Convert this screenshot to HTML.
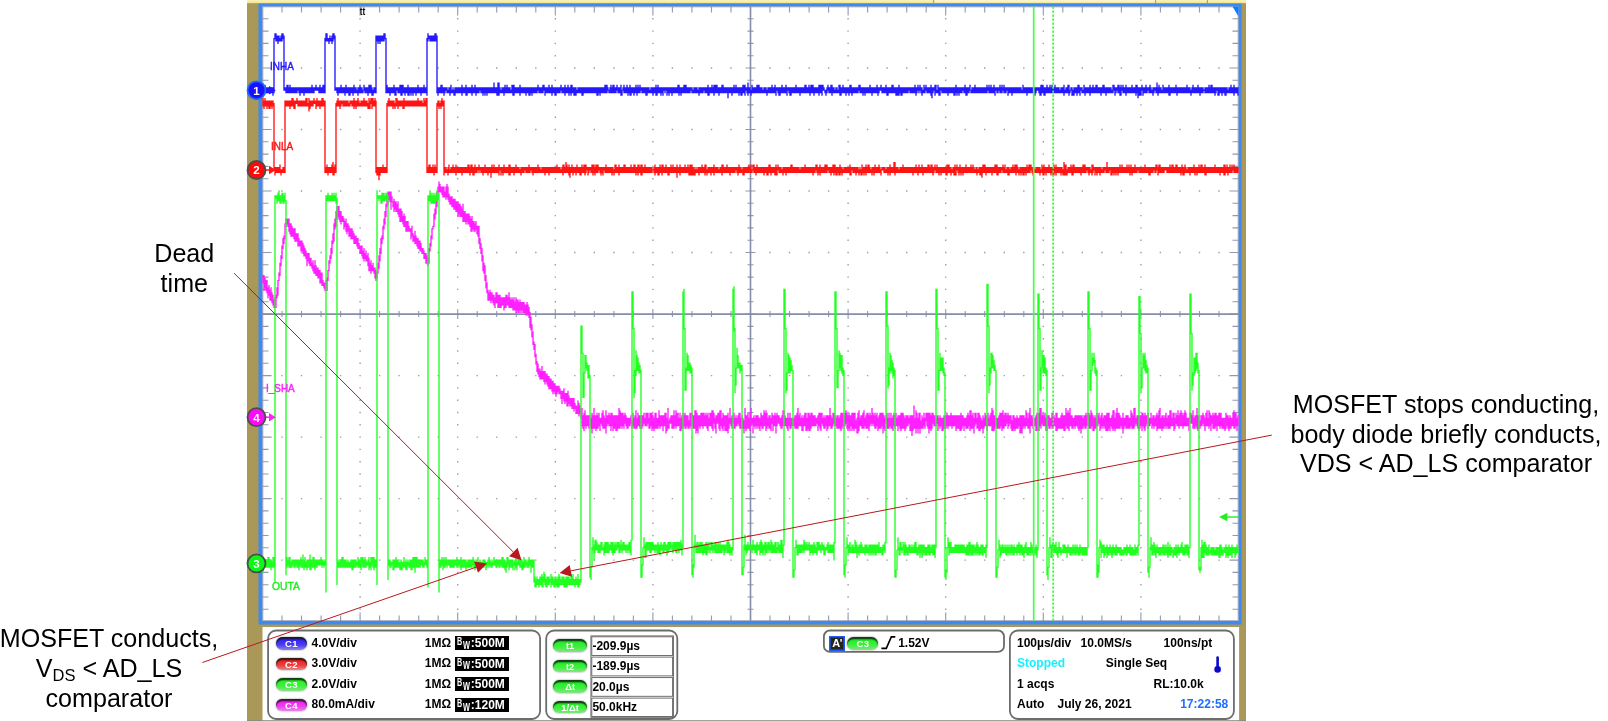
<!DOCTYPE html>
<html lang="en"><head><meta charset="utf-8"><title>Scope capture</title>
<style>
html,body{margin:0;padding:0;background:#fff;}
body{width:1608px;height:721px;position:relative;overflow:hidden;font-family:"Liberation Sans",Arial,sans-serif;color:#000;}
.abs{position:absolute;}
#frame{left:247px;top:0;width:999px;height:721px;background:#aa9858;}
#topband{left:247px;top:0;width:999px;height:3.2px;background:linear-gradient(#f7f1c4,#f4e98e);}
#plotb{left:258.5px;top:3.6px;width:983px;height:620.9px;background:#3c8af4;}
#plotw{left:262.5px;top:6.5px;width:976px;height:614.5px;background:#fff;}
#lower{left:262.5px;top:627px;width:976.5px;height:94px;background:#fff;}
#botline{left:247px;top:720px;width:999px;height:1px;background:#8a8a80;}
svg{position:absolute;left:0;top:0;overflow:visible;}
.note{position:absolute;text-align:center;font-size:25.1px;line-height:29.75px;white-space:nowrap;color:#000;}
.note sub{font-size:16.5px;vertical-align:baseline;position:relative;top:4.1px;line-height:0;}
.box{position:absolute;border:1.9px solid #6e6e6e;border-radius:8px;box-sizing:border-box;background:#fff;}
.t{position:absolute;font-weight:bold;font-size:12px;line-height:14px;white-space:nowrap;}
.pill{position:absolute;width:31.5px;height:12.5px;border-radius:7px;box-sizing:border-box;color:#fff;font-weight:bold;font-size:9.5px;line-height:13.6px;text-align:center;letter-spacing:.3px;text-indent:.3px;box-shadow:inset 0 2.2px 1.2px rgba(20,26,20,.85),0 0 1.8px rgba(90,100,90,.9);}
.pill.g{font-size:9.4px;line-height:13px;letter-spacing:0;text-indent:0;width:34.2px;}
.bw{position:absolute;width:53.5px;height:14px;background:#000;color:#fff;font-weight:bold;font-size:12px;line-height:15px;white-space:nowrap;}
.bw b{position:absolute;left:1.7px;top:-2px;font-size:10px;transform-origin:0 0;transform:scaleX(.72);}
.bw i{position:absolute;left:7.9px;top:1.5px;font-size:10px;font-style:normal;transform-origin:0 0;transform:scaleX(.74);}
.bw span{position:absolute;left:15.8px;top:-.3px;}
.lbl{position:absolute;font-size:11.5px;line-height:11.5px;white-space:nowrap;transform-origin:0 0;transform:scaleX(.865);-webkit-text-stroke:.45px currentColor;}
.cell{position:absolute;left:590.5px;width:83px;border:1px solid #555;box-sizing:border-box;height:21.4px;font-weight:bold;font-size:12px;line-height:18.5px;padding-left:.5px;background:#fff;white-space:nowrap;}
</style></head><body>
<div id="wrap" style="position:absolute;left:0;top:0;width:1608px;height:721px;will-change:transform;">

<svg width="1608" height="721" viewBox="0 0 1608 721">
<defs>
<linearGradient id="yb" x1="0" y1="0" x2="0" y2="1"><stop offset="0" stop-color="#f7f1c6"/><stop offset=".75" stop-color="#f5ea8c"/><stop offset="1" stop-color="#d8c870"/></linearGradient>
</defs>
<rect x="247" y="0" width="999" height="721" fill="#aa9858"/>
<rect x="247" y="0" width="999" height="3.3" fill="url(#yb)"/>
<rect x="934" y="0" width="221.6" height="2.6" fill="#fff" opacity=".28"/>
<path d="M933.7 0V3M1155.6 0V3M1207.4 0V3" stroke="#7a7448" stroke-width="1" opacity=".7"/>
<rect x="258.5" y="3.6" width="983" height="620.9" fill="#3c8af4"/>
<rect x="262.5" y="6.5" width="976" height="614.5" fill="#fff"/>
<rect x="262.5" y="627" width="976.6" height="94" fill="#fff"/>
<rect x="247" y="720.2" width="999" height="0.8" fill="#8a8a80"/>
<defs>
<radialGradient id="gb" cx=".45" cy=".4" r=".6"><stop offset="0" stop-color="#2a1cff"/><stop offset=".8" stop-color="#1c10f0"/><stop offset="1" stop-color="#1a60ff"/></radialGradient>
</defs>
<path d="M282 6.5 v6 M282 621 v-5.4 M282 311.1 v6 M301.5 6.5 v6 M301.5 621 v-5.4 M301.5 311.1 v6 M321.1 6.5 v6 M321.1 621 v-5.4 M321.1 311.1 v6 M340.6 6.5 v6 M340.6 621 v-5.4 M340.6 311.1 v6 M360.1 6.5 v9 M360.1 621 v-8.4 M360.1 309.1 v10 M379.6 6.5 v6 M379.6 621 v-5.4 M379.6 311.1 v6 M399.1 6.5 v6 M399.1 621 v-5.4 M399.1 311.1 v6 M418.7 6.5 v6 M418.7 621 v-5.4 M418.7 311.1 v6 M438.2 6.5 v6 M438.2 621 v-5.4 M438.2 311.1 v6 M457.7 6.5 v9 M457.7 621 v-8.4 M457.7 309.1 v10 M477.2 6.5 v6 M477.2 621 v-5.4 M477.2 311.1 v6 M496.7 6.5 v6 M496.7 621 v-5.4 M496.7 311.1 v6 M516.3 6.5 v6 M516.3 621 v-5.4 M516.3 311.1 v6 M535.8 6.5 v6 M535.8 621 v-5.4 M535.8 311.1 v6 M555.3 6.5 v9 M555.3 621 v-8.4 M555.3 309.1 v10 M574.8 6.5 v6 M574.8 621 v-5.4 M574.8 311.1 v6 M594.3 6.5 v6 M594.3 621 v-5.4 M594.3 311.1 v6 M613.9 6.5 v6 M613.9 621 v-5.4 M613.9 311.1 v6 M633.4 6.5 v6 M633.4 621 v-5.4 M633.4 311.1 v6 M652.9 6.5 v9 M652.9 621 v-8.4 M652.9 309.1 v10 M672.4 6.5 v6 M672.4 621 v-5.4 M672.4 311.1 v6 M691.9 6.5 v6 M691.9 621 v-5.4 M691.9 311.1 v6 M711.5 6.5 v6 M711.5 621 v-5.4 M711.5 311.1 v6 M731 6.5 v6 M731 621 v-5.4 M731 311.1 v6 M750.5 6.5 v9 M750.5 621 v-8.4 M750.5 309.1 v10 M770 6.5 v6 M770 621 v-5.4 M770 311.1 v6 M789.5 6.5 v6 M789.5 621 v-5.4 M789.5 311.1 v6 M809.1 6.5 v6 M809.1 621 v-5.4 M809.1 311.1 v6 M828.6 6.5 v6 M828.6 621 v-5.4 M828.6 311.1 v6 M848.1 6.5 v9 M848.1 621 v-8.4 M848.1 309.1 v10 M867.6 6.5 v6 M867.6 621 v-5.4 M867.6 311.1 v6 M887.1 6.5 v6 M887.1 621 v-5.4 M887.1 311.1 v6 M906.7 6.5 v6 M906.7 621 v-5.4 M906.7 311.1 v6 M926.2 6.5 v6 M926.2 621 v-5.4 M926.2 311.1 v6 M945.7 6.5 v9 M945.7 621 v-8.4 M945.7 309.1 v10 M965.2 6.5 v6 M965.2 621 v-5.4 M965.2 311.1 v6 M984.7 6.5 v6 M984.7 621 v-5.4 M984.7 311.1 v6 M1004.3 6.5 v6 M1004.3 621 v-5.4 M1004.3 311.1 v6 M1023.8 6.5 v6 M1023.8 621 v-5.4 M1023.8 311.1 v6 M1043.3 6.5 v9 M1043.3 621 v-8.4 M1043.3 309.1 v10 M1062.8 6.5 v6 M1062.8 621 v-5.4 M1062.8 311.1 v6 M1082.3 6.5 v6 M1082.3 621 v-5.4 M1082.3 311.1 v6 M1101.9 6.5 v6 M1101.9 621 v-5.4 M1101.9 311.1 v6 M1121.4 6.5 v6 M1121.4 621 v-5.4 M1121.4 311.1 v6 M1140.9 6.5 v9 M1140.9 621 v-8.4 M1140.9 309.1 v10 M1160.4 6.5 v6 M1160.4 621 v-5.4 M1160.4 311.1 v6 M1179.9 6.5 v6 M1179.9 621 v-5.4 M1179.9 311.1 v6 M1199.5 6.5 v6 M1199.5 621 v-5.4 M1199.5 311.1 v6 M1219 6.5 v6 M1219 621 v-5.4 M1219 311.1 v6 M262.5 18.8 h6 M1238.5 18.8 h-6 M747.5 18.8 h6 M262.5 31.1 h6 M1238.5 31.1 h-6 M747.5 31.1 h6 M262.5 43.4 h6 M1238.5 43.4 h-6 M747.5 43.4 h6 M262.5 55.7 h6 M1238.5 55.7 h-6 M747.5 55.7 h6 M262.5 68 h9 M1238.5 68 h-9 M745.5 68 h10 M262.5 80.3 h6 M1238.5 80.3 h-6 M747.5 80.3 h6 M262.5 92.6 h6 M1238.5 92.6 h-6 M747.5 92.6 h6 M262.5 104.9 h6 M1238.5 104.9 h-6 M747.5 104.9 h6 M262.5 117.2 h6 M1238.5 117.2 h-6 M747.5 117.2 h6 M262.5 129.5 h9 M1238.5 129.5 h-9 M745.5 129.5 h10 M262.5 141.8 h6 M1238.5 141.8 h-6 M747.5 141.8 h6 M262.5 154.1 h6 M1238.5 154.1 h-6 M747.5 154.1 h6 M262.5 166.4 h6 M1238.5 166.4 h-6 M747.5 166.4 h6 M262.5 178.7 h6 M1238.5 178.7 h-6 M747.5 178.7 h6 M262.5 191 h9 M1238.5 191 h-9 M745.5 191 h10 M262.5 203.3 h6 M1238.5 203.3 h-6 M747.5 203.3 h6 M262.5 215.6 h6 M1238.5 215.6 h-6 M747.5 215.6 h6 M262.5 227.9 h6 M1238.5 227.9 h-6 M747.5 227.9 h6 M262.5 240.2 h6 M1238.5 240.2 h-6 M747.5 240.2 h6 M262.5 252.5 h9 M1238.5 252.5 h-9 M745.5 252.5 h10 M262.5 264.8 h6 M1238.5 264.8 h-6 M747.5 264.8 h6 M262.5 277.1 h6 M1238.5 277.1 h-6 M747.5 277.1 h6 M262.5 289.4 h6 M1238.5 289.4 h-6 M747.5 289.4 h6 M262.5 301.7 h6 M1238.5 301.7 h-6 M747.5 301.7 h6 M262.5 314.1 h9 M1238.5 314.1 h-9 M745.5 314.1 h10 M262.5 326.4 h6 M1238.5 326.4 h-6 M747.5 326.4 h6 M262.5 338.7 h6 M1238.5 338.7 h-6 M747.5 338.7 h6 M262.5 351 h6 M1238.5 351 h-6 M747.5 351 h6 M262.5 363.3 h6 M1238.5 363.3 h-6 M747.5 363.3 h6 M262.5 375.6 h9 M1238.5 375.6 h-9 M745.5 375.6 h10 M262.5 387.9 h6 M1238.5 387.9 h-6 M747.5 387.9 h6 M262.5 400.2 h6 M1238.5 400.2 h-6 M747.5 400.2 h6 M262.5 412.5 h6 M1238.5 412.5 h-6 M747.5 412.5 h6 M262.5 424.8 h6 M1238.5 424.8 h-6 M747.5 424.8 h6 M262.5 437.1 h9 M1238.5 437.1 h-9 M745.5 437.1 h10 M262.5 449.4 h6 M1238.5 449.4 h-6 M747.5 449.4 h6 M262.5 461.7 h6 M1238.5 461.7 h-6 M747.5 461.7 h6 M262.5 474 h6 M1238.5 474 h-6 M747.5 474 h6 M262.5 486.3 h6 M1238.5 486.3 h-6 M747.5 486.3 h6 M262.5 498.6 h9 M1238.5 498.6 h-9 M745.5 498.6 h10 M262.5 510.9 h6 M1238.5 510.9 h-6 M747.5 510.9 h6 M262.5 523.2 h6 M1238.5 523.2 h-6 M747.5 523.2 h6 M262.5 535.5 h6 M1238.5 535.5 h-6 M747.5 535.5 h6 M262.5 547.8 h6 M1238.5 547.8 h-6 M747.5 547.8 h6 M262.5 560.1 h9 M1238.5 560.1 h-9 M745.5 560.1 h10 M262.5 572.4 h6 M1238.5 572.4 h-6 M747.5 572.4 h6 M262.5 584.7 h6 M1238.5 584.7 h-6 M747.5 584.7 h6 M262.5 597 h6 M1238.5 597 h-6 M747.5 597 h6 M262.5 609.3 h6 M1238.5 609.3 h-6 M747.5 609.3 h6" stroke="#868da8" stroke-width="1.1" fill="none" opacity=".9"/>
<path d="M262.5 314.1 H1238.5 M750.5 6.5 V621" stroke="#868da8" stroke-width="1.6" fill="none"/>
<rect x="262.8" y="6.8" width="975.4" height="613.9" fill="none" stroke="#868da8" stroke-width="1" opacity=".8"/>
<path d="M359.4 18.8h1.4M359.4 31.1h1.4M359.4 43.4h1.4M359.4 55.7h1.4M359.4 68h1.4M359.4 80.3h1.4M359.4 92.6h1.4M359.4 104.9h1.4M359.4 117.2h1.4M359.4 129.5h1.4M359.4 141.8h1.4M359.4 154.1h1.4M359.4 166.4h1.4M359.4 178.7h1.4M359.4 191h1.4M359.4 203.3h1.4M359.4 215.6h1.4M359.4 227.9h1.4M359.4 240.2h1.4M359.4 252.5h1.4M359.4 264.8h1.4M359.4 277.1h1.4M359.4 289.4h1.4M359.4 301.7h1.4M359.4 314.1h1.4M359.4 326.4h1.4M359.4 338.7h1.4M359.4 351h1.4M359.4 363.3h1.4M359.4 375.6h1.4M359.4 387.9h1.4M359.4 400.2h1.4M359.4 412.5h1.4M359.4 424.8h1.4M359.4 437.1h1.4M359.4 449.4h1.4M359.4 461.7h1.4M359.4 474h1.4M359.4 486.3h1.4M359.4 498.6h1.4M359.4 510.9h1.4M359.4 523.2h1.4M359.4 535.5h1.4M359.4 547.8h1.4M359.4 560.1h1.4M359.4 572.4h1.4M359.4 584.7h1.4M359.4 597h1.4M359.4 609.3h1.4M457 18.8h1.4M457 31.1h1.4M457 43.4h1.4M457 55.7h1.4M457 68h1.4M457 80.3h1.4M457 92.6h1.4M457 104.9h1.4M457 117.2h1.4M457 129.5h1.4M457 141.8h1.4M457 154.1h1.4M457 166.4h1.4M457 178.7h1.4M457 191h1.4M457 203.3h1.4M457 215.6h1.4M457 227.9h1.4M457 240.2h1.4M457 252.5h1.4M457 264.8h1.4M457 277.1h1.4M457 289.4h1.4M457 301.7h1.4M457 314.1h1.4M457 326.4h1.4M457 338.7h1.4M457 351h1.4M457 363.3h1.4M457 375.6h1.4M457 387.9h1.4M457 400.2h1.4M457 412.5h1.4M457 424.8h1.4M457 437.1h1.4M457 449.4h1.4M457 461.7h1.4M457 474h1.4M457 486.3h1.4M457 498.6h1.4M457 510.9h1.4M457 523.2h1.4M457 535.5h1.4M457 547.8h1.4M457 560.1h1.4M457 572.4h1.4M457 584.7h1.4M457 597h1.4M457 609.3h1.4M554.6 18.8h1.4M554.6 31.1h1.4M554.6 43.4h1.4M554.6 55.7h1.4M554.6 68h1.4M554.6 80.3h1.4M554.6 92.6h1.4M554.6 104.9h1.4M554.6 117.2h1.4M554.6 129.5h1.4M554.6 141.8h1.4M554.6 154.1h1.4M554.6 166.4h1.4M554.6 178.7h1.4M554.6 191h1.4M554.6 203.3h1.4M554.6 215.6h1.4M554.6 227.9h1.4M554.6 240.2h1.4M554.6 252.5h1.4M554.6 264.8h1.4M554.6 277.1h1.4M554.6 289.4h1.4M554.6 301.7h1.4M554.6 314.1h1.4M554.6 326.4h1.4M554.6 338.7h1.4M554.6 351h1.4M554.6 363.3h1.4M554.6 375.6h1.4M554.6 387.9h1.4M554.6 400.2h1.4M554.6 412.5h1.4M554.6 424.8h1.4M554.6 437.1h1.4M554.6 449.4h1.4M554.6 461.7h1.4M554.6 474h1.4M554.6 486.3h1.4M554.6 498.6h1.4M554.6 510.9h1.4M554.6 523.2h1.4M554.6 535.5h1.4M554.6 547.8h1.4M554.6 560.1h1.4M554.6 572.4h1.4M554.6 584.7h1.4M554.6 597h1.4M554.6 609.3h1.4M652.2 18.8h1.4M652.2 31.1h1.4M652.2 43.4h1.4M652.2 55.7h1.4M652.2 68h1.4M652.2 80.3h1.4M652.2 92.6h1.4M652.2 104.9h1.4M652.2 117.2h1.4M652.2 129.5h1.4M652.2 141.8h1.4M652.2 154.1h1.4M652.2 166.4h1.4M652.2 178.7h1.4M652.2 191h1.4M652.2 203.3h1.4M652.2 215.6h1.4M652.2 227.9h1.4M652.2 240.2h1.4M652.2 252.5h1.4M652.2 264.8h1.4M652.2 277.1h1.4M652.2 289.4h1.4M652.2 301.7h1.4M652.2 314.1h1.4M652.2 326.4h1.4M652.2 338.7h1.4M652.2 351h1.4M652.2 363.3h1.4M652.2 375.6h1.4M652.2 387.9h1.4M652.2 400.2h1.4M652.2 412.5h1.4M652.2 424.8h1.4M652.2 437.1h1.4M652.2 449.4h1.4M652.2 461.7h1.4M652.2 474h1.4M652.2 486.3h1.4M652.2 498.6h1.4M652.2 510.9h1.4M652.2 523.2h1.4M652.2 535.5h1.4M652.2 547.8h1.4M652.2 560.1h1.4M652.2 572.4h1.4M652.2 584.7h1.4M652.2 597h1.4M652.2 609.3h1.4M847.4 18.8h1.4M847.4 31.1h1.4M847.4 43.4h1.4M847.4 55.7h1.4M847.4 68h1.4M847.4 80.3h1.4M847.4 92.6h1.4M847.4 104.9h1.4M847.4 117.2h1.4M847.4 129.5h1.4M847.4 141.8h1.4M847.4 154.1h1.4M847.4 166.4h1.4M847.4 178.7h1.4M847.4 191h1.4M847.4 203.3h1.4M847.4 215.6h1.4M847.4 227.9h1.4M847.4 240.2h1.4M847.4 252.5h1.4M847.4 264.8h1.4M847.4 277.1h1.4M847.4 289.4h1.4M847.4 301.7h1.4M847.4 314.1h1.4M847.4 326.4h1.4M847.4 338.7h1.4M847.4 351h1.4M847.4 363.3h1.4M847.4 375.6h1.4M847.4 387.9h1.4M847.4 400.2h1.4M847.4 412.5h1.4M847.4 424.8h1.4M847.4 437.1h1.4M847.4 449.4h1.4M847.4 461.7h1.4M847.4 474h1.4M847.4 486.3h1.4M847.4 498.6h1.4M847.4 510.9h1.4M847.4 523.2h1.4M847.4 535.5h1.4M847.4 547.8h1.4M847.4 560.1h1.4M847.4 572.4h1.4M847.4 584.7h1.4M847.4 597h1.4M847.4 609.3h1.4M945 18.8h1.4M945 31.1h1.4M945 43.4h1.4M945 55.7h1.4M945 68h1.4M945 80.3h1.4M945 92.6h1.4M945 104.9h1.4M945 117.2h1.4M945 129.5h1.4M945 141.8h1.4M945 154.1h1.4M945 166.4h1.4M945 178.7h1.4M945 191h1.4M945 203.3h1.4M945 215.6h1.4M945 227.9h1.4M945 240.2h1.4M945 252.5h1.4M945 264.8h1.4M945 277.1h1.4M945 289.4h1.4M945 301.7h1.4M945 314.1h1.4M945 326.4h1.4M945 338.7h1.4M945 351h1.4M945 363.3h1.4M945 375.6h1.4M945 387.9h1.4M945 400.2h1.4M945 412.5h1.4M945 424.8h1.4M945 437.1h1.4M945 449.4h1.4M945 461.7h1.4M945 474h1.4M945 486.3h1.4M945 498.6h1.4M945 510.9h1.4M945 523.2h1.4M945 535.5h1.4M945 547.8h1.4M945 560.1h1.4M945 572.4h1.4M945 584.7h1.4M945 597h1.4M945 609.3h1.4M1042.6 18.8h1.4M1042.6 31.1h1.4M1042.6 43.4h1.4M1042.6 55.7h1.4M1042.6 68h1.4M1042.6 80.3h1.4M1042.6 92.6h1.4M1042.6 104.9h1.4M1042.6 117.2h1.4M1042.6 129.5h1.4M1042.6 141.8h1.4M1042.6 154.1h1.4M1042.6 166.4h1.4M1042.6 178.7h1.4M1042.6 191h1.4M1042.6 203.3h1.4M1042.6 215.6h1.4M1042.6 227.9h1.4M1042.6 240.2h1.4M1042.6 252.5h1.4M1042.6 264.8h1.4M1042.6 277.1h1.4M1042.6 289.4h1.4M1042.6 301.7h1.4M1042.6 314.1h1.4M1042.6 326.4h1.4M1042.6 338.7h1.4M1042.6 351h1.4M1042.6 363.3h1.4M1042.6 375.6h1.4M1042.6 387.9h1.4M1042.6 400.2h1.4M1042.6 412.5h1.4M1042.6 424.8h1.4M1042.6 437.1h1.4M1042.6 449.4h1.4M1042.6 461.7h1.4M1042.6 474h1.4M1042.6 486.3h1.4M1042.6 498.6h1.4M1042.6 510.9h1.4M1042.6 523.2h1.4M1042.6 535.5h1.4M1042.6 547.8h1.4M1042.6 560.1h1.4M1042.6 572.4h1.4M1042.6 584.7h1.4M1042.6 597h1.4M1042.6 609.3h1.4M1140.2 18.8h1.4M1140.2 31.1h1.4M1140.2 43.4h1.4M1140.2 55.7h1.4M1140.2 68h1.4M1140.2 80.3h1.4M1140.2 92.6h1.4M1140.2 104.9h1.4M1140.2 117.2h1.4M1140.2 129.5h1.4M1140.2 141.8h1.4M1140.2 154.1h1.4M1140.2 166.4h1.4M1140.2 178.7h1.4M1140.2 191h1.4M1140.2 203.3h1.4M1140.2 215.6h1.4M1140.2 227.9h1.4M1140.2 240.2h1.4M1140.2 252.5h1.4M1140.2 264.8h1.4M1140.2 277.1h1.4M1140.2 289.4h1.4M1140.2 301.7h1.4M1140.2 314.1h1.4M1140.2 326.4h1.4M1140.2 338.7h1.4M1140.2 351h1.4M1140.2 363.3h1.4M1140.2 375.6h1.4M1140.2 387.9h1.4M1140.2 400.2h1.4M1140.2 412.5h1.4M1140.2 424.8h1.4M1140.2 437.1h1.4M1140.2 449.4h1.4M1140.2 461.7h1.4M1140.2 474h1.4M1140.2 486.3h1.4M1140.2 498.6h1.4M1140.2 510.9h1.4M1140.2 523.2h1.4M1140.2 535.5h1.4M1140.2 547.8h1.4M1140.2 560.1h1.4M1140.2 572.4h1.4M1140.2 584.7h1.4M1140.2 597h1.4M1140.2 609.3h1.4M281.3 68h1.4M300.8 68h1.4M320.4 68h1.4M339.9 68h1.4M359.4 68h1.4M378.9 68h1.4M398.4 68h1.4M418 68h1.4M437.5 68h1.4M457 68h1.4M476.5 68h1.4M496 68h1.4M515.6 68h1.4M535.1 68h1.4M554.6 68h1.4M574.1 68h1.4M593.6 68h1.4M613.2 68h1.4M632.7 68h1.4M652.2 68h1.4M671.7 68h1.4M691.2 68h1.4M710.8 68h1.4M730.3 68h1.4M749.8 68h1.4M769.3 68h1.4M788.8 68h1.4M808.4 68h1.4M827.9 68h1.4M847.4 68h1.4M866.9 68h1.4M886.4 68h1.4M906 68h1.4M925.5 68h1.4M945 68h1.4M964.5 68h1.4M984 68h1.4M1003.6 68h1.4M1023.1 68h1.4M1042.6 68h1.4M1062.1 68h1.4M1081.6 68h1.4M1101.2 68h1.4M1120.7 68h1.4M1140.2 68h1.4M1159.7 68h1.4M1179.2 68h1.4M1198.8 68h1.4M1218.3 68h1.4M281.3 129.5h1.4M300.8 129.5h1.4M320.4 129.5h1.4M339.9 129.5h1.4M359.4 129.5h1.4M378.9 129.5h1.4M398.4 129.5h1.4M418 129.5h1.4M437.5 129.5h1.4M457 129.5h1.4M476.5 129.5h1.4M496 129.5h1.4M515.6 129.5h1.4M535.1 129.5h1.4M554.6 129.5h1.4M574.1 129.5h1.4M593.6 129.5h1.4M613.2 129.5h1.4M632.7 129.5h1.4M652.2 129.5h1.4M671.7 129.5h1.4M691.2 129.5h1.4M710.8 129.5h1.4M730.3 129.5h1.4M749.8 129.5h1.4M769.3 129.5h1.4M788.8 129.5h1.4M808.4 129.5h1.4M827.9 129.5h1.4M847.4 129.5h1.4M866.9 129.5h1.4M886.4 129.5h1.4M906 129.5h1.4M925.5 129.5h1.4M945 129.5h1.4M964.5 129.5h1.4M984 129.5h1.4M1003.6 129.5h1.4M1023.1 129.5h1.4M1042.6 129.5h1.4M1062.1 129.5h1.4M1081.6 129.5h1.4M1101.2 129.5h1.4M1120.7 129.5h1.4M1140.2 129.5h1.4M1159.7 129.5h1.4M1179.2 129.5h1.4M1198.8 129.5h1.4M1218.3 129.5h1.4M281.3 191h1.4M300.8 191h1.4M320.4 191h1.4M339.9 191h1.4M359.4 191h1.4M378.9 191h1.4M398.4 191h1.4M418 191h1.4M437.5 191h1.4M457 191h1.4M476.5 191h1.4M496 191h1.4M515.6 191h1.4M535.1 191h1.4M554.6 191h1.4M574.1 191h1.4M593.6 191h1.4M613.2 191h1.4M632.7 191h1.4M652.2 191h1.4M671.7 191h1.4M691.2 191h1.4M710.8 191h1.4M730.3 191h1.4M749.8 191h1.4M769.3 191h1.4M788.8 191h1.4M808.4 191h1.4M827.9 191h1.4M847.4 191h1.4M866.9 191h1.4M886.4 191h1.4M906 191h1.4M925.5 191h1.4M945 191h1.4M964.5 191h1.4M984 191h1.4M1003.6 191h1.4M1023.1 191h1.4M1042.6 191h1.4M1062.1 191h1.4M1081.6 191h1.4M1101.2 191h1.4M1120.7 191h1.4M1140.2 191h1.4M1159.7 191h1.4M1179.2 191h1.4M1198.8 191h1.4M1218.3 191h1.4M281.3 252.5h1.4M300.8 252.5h1.4M320.4 252.5h1.4M339.9 252.5h1.4M359.4 252.5h1.4M378.9 252.5h1.4M398.4 252.5h1.4M418 252.5h1.4M437.5 252.5h1.4M457 252.5h1.4M476.5 252.5h1.4M496 252.5h1.4M515.6 252.5h1.4M535.1 252.5h1.4M554.6 252.5h1.4M574.1 252.5h1.4M593.6 252.5h1.4M613.2 252.5h1.4M632.7 252.5h1.4M652.2 252.5h1.4M671.7 252.5h1.4M691.2 252.5h1.4M710.8 252.5h1.4M730.3 252.5h1.4M749.8 252.5h1.4M769.3 252.5h1.4M788.8 252.5h1.4M808.4 252.5h1.4M827.9 252.5h1.4M847.4 252.5h1.4M866.9 252.5h1.4M886.4 252.5h1.4M906 252.5h1.4M925.5 252.5h1.4M945 252.5h1.4M964.5 252.5h1.4M984 252.5h1.4M1003.6 252.5h1.4M1023.1 252.5h1.4M1042.6 252.5h1.4M1062.1 252.5h1.4M1081.6 252.5h1.4M1101.2 252.5h1.4M1120.7 252.5h1.4M1140.2 252.5h1.4M1159.7 252.5h1.4M1179.2 252.5h1.4M1198.8 252.5h1.4M1218.3 252.5h1.4M281.3 375.6h1.4M300.8 375.6h1.4M320.4 375.6h1.4M339.9 375.6h1.4M359.4 375.6h1.4M378.9 375.6h1.4M398.4 375.6h1.4M418 375.6h1.4M437.5 375.6h1.4M457 375.6h1.4M476.5 375.6h1.4M496 375.6h1.4M515.6 375.6h1.4M535.1 375.6h1.4M554.6 375.6h1.4M574.1 375.6h1.4M593.6 375.6h1.4M613.2 375.6h1.4M632.7 375.6h1.4M652.2 375.6h1.4M671.7 375.6h1.4M691.2 375.6h1.4M710.8 375.6h1.4M730.3 375.6h1.4M749.8 375.6h1.4M769.3 375.6h1.4M788.8 375.6h1.4M808.4 375.6h1.4M827.9 375.6h1.4M847.4 375.6h1.4M866.9 375.6h1.4M886.4 375.6h1.4M906 375.6h1.4M925.5 375.6h1.4M945 375.6h1.4M964.5 375.6h1.4M984 375.6h1.4M1003.6 375.6h1.4M1023.1 375.6h1.4M1042.6 375.6h1.4M1062.1 375.6h1.4M1081.6 375.6h1.4M1101.2 375.6h1.4M1120.7 375.6h1.4M1140.2 375.6h1.4M1159.7 375.6h1.4M1179.2 375.6h1.4M1198.8 375.6h1.4M1218.3 375.6h1.4M281.3 437.1h1.4M300.8 437.1h1.4M320.4 437.1h1.4M339.9 437.1h1.4M359.4 437.1h1.4M378.9 437.1h1.4M398.4 437.1h1.4M418 437.1h1.4M437.5 437.1h1.4M457 437.1h1.4M476.5 437.1h1.4M496 437.1h1.4M515.6 437.1h1.4M535.1 437.1h1.4M554.6 437.1h1.4M574.1 437.1h1.4M593.6 437.1h1.4M613.2 437.1h1.4M632.7 437.1h1.4M652.2 437.1h1.4M671.7 437.1h1.4M691.2 437.1h1.4M710.8 437.1h1.4M730.3 437.1h1.4M749.8 437.1h1.4M769.3 437.1h1.4M788.8 437.1h1.4M808.4 437.1h1.4M827.9 437.1h1.4M847.4 437.1h1.4M866.9 437.1h1.4M886.4 437.1h1.4M906 437.1h1.4M925.5 437.1h1.4M945 437.1h1.4M964.5 437.1h1.4M984 437.1h1.4M1003.6 437.1h1.4M1023.1 437.1h1.4M1042.6 437.1h1.4M1062.1 437.1h1.4M1081.6 437.1h1.4M1101.2 437.1h1.4M1120.7 437.1h1.4M1140.2 437.1h1.4M1159.7 437.1h1.4M1179.2 437.1h1.4M1198.8 437.1h1.4M1218.3 437.1h1.4M281.3 498.6h1.4M300.8 498.6h1.4M320.4 498.6h1.4M339.9 498.6h1.4M359.4 498.6h1.4M378.9 498.6h1.4M398.4 498.6h1.4M418 498.6h1.4M437.5 498.6h1.4M457 498.6h1.4M476.5 498.6h1.4M496 498.6h1.4M515.6 498.6h1.4M535.1 498.6h1.4M554.6 498.6h1.4M574.1 498.6h1.4M593.6 498.6h1.4M613.2 498.6h1.4M632.7 498.6h1.4M652.2 498.6h1.4M671.7 498.6h1.4M691.2 498.6h1.4M710.8 498.6h1.4M730.3 498.6h1.4M749.8 498.6h1.4M769.3 498.6h1.4M788.8 498.6h1.4M808.4 498.6h1.4M827.9 498.6h1.4M847.4 498.6h1.4M866.9 498.6h1.4M886.4 498.6h1.4M906 498.6h1.4M925.5 498.6h1.4M945 498.6h1.4M964.5 498.6h1.4M984 498.6h1.4M1003.6 498.6h1.4M1023.1 498.6h1.4M1042.6 498.6h1.4M1062.1 498.6h1.4M1081.6 498.6h1.4M1101.2 498.6h1.4M1120.7 498.6h1.4M1140.2 498.6h1.4M1159.7 498.6h1.4M1179.2 498.6h1.4M1198.8 498.6h1.4M1218.3 498.6h1.4M281.3 560.1h1.4M300.8 560.1h1.4M320.4 560.1h1.4M339.9 560.1h1.4M359.4 560.1h1.4M378.9 560.1h1.4M398.4 560.1h1.4M418 560.1h1.4M437.5 560.1h1.4M457 560.1h1.4M476.5 560.1h1.4M496 560.1h1.4M515.6 560.1h1.4M535.1 560.1h1.4M554.6 560.1h1.4M574.1 560.1h1.4M593.6 560.1h1.4M613.2 560.1h1.4M632.7 560.1h1.4M652.2 560.1h1.4M671.7 560.1h1.4M691.2 560.1h1.4M710.8 560.1h1.4M730.3 560.1h1.4M749.8 560.1h1.4M769.3 560.1h1.4M788.8 560.1h1.4M808.4 560.1h1.4M827.9 560.1h1.4M847.4 560.1h1.4M866.9 560.1h1.4M886.4 560.1h1.4M906 560.1h1.4M925.5 560.1h1.4M945 560.1h1.4M964.5 560.1h1.4M984 560.1h1.4M1003.6 560.1h1.4M1023.1 560.1h1.4M1042.6 560.1h1.4M1062.1 560.1h1.4M1081.6 560.1h1.4M1101.2 560.1h1.4M1120.7 560.1h1.4M1140.2 560.1h1.4M1159.7 560.1h1.4M1179.2 560.1h1.4M1198.8 560.1h1.4M1218.3 560.1h1.4" stroke="#868da8" stroke-width="1.4" fill="none" opacity=".85"/>
<path d="M263 87.3V93.3M264 87.3V93.3M265 84.8V90.8M266 87.3V93.3M267 87.3V93.3M268 87.3V93.3M269 87.3V93.3M270 87.3V93.3M271 87.3V93.3M272 87.3V93.3M273 87.3V95.8M274 38.1V93.3M275 33.2V39.2M276 33.2V41.6M277 35.6V41.6M278 35.6V44.1M279 35.6V41.6M280 38.1V41.6M281 35.6V41.6M282 33.2V41.6M283 33.2V39.2M284 35.6V90.8M285 87.3V90.8M286 87.3V93.3M287 84.8V93.3M288 84.8V93.3M289 87.3V93.3M290 84.8V93.3M291 87.3V93.3M292 87.3V93.3M293 87.3V93.3M294 87.3V93.3M295 87.3V93.3M296 87.3V93.3M297 87.3V93.3M298 87.3V90.8M299 87.3V93.3M300 87.3V95.8M301 87.3V93.3M302 87.3V93.3M303 87.3V93.3M304 87.3V95.8M305 87.3V93.3M306 87.3V93.3M307 87.3V93.3M308 87.3V93.3M309 87.3V93.3M310 87.3V93.3M311 87.3V93.3M312 84.8V93.3M313 87.3V93.3M314 87.3V93.3M315 87.3V90.8M316 84.8V90.8M317 87.3V90.8M318 87.3V90.8M319 87.3V93.3M320 84.8V93.3M321 87.3V93.3M322 87.3V93.3M323 84.8V93.3M324 84.8V93.3M325 38.1V93.3M326 33.2V41.6M327 33.2V41.6M328 38.1V41.6M329 38.1V44.1M330 35.6V41.6M331 38.1V41.6M332 35.6V44.1M333 33.2V41.6M334 33.2V39.2M335 35.6V90.8M336 87.3V90.8M337 87.3V93.3M338 87.3V95.8M339 87.3V93.3M340 87.3V93.3M341 84.8V93.3M342 87.3V93.3M343 87.3V93.3M344 87.3V93.3M345 87.3V95.8M346 84.8V93.3M347 87.3V93.3M348 87.3V93.3M349 87.3V95.8M350 87.3V95.8M351 87.3V93.3M352 87.3V93.3M353 87.3V95.8M354 84.8V93.3M355 87.3V93.3M356 87.3V93.3M357 89.8V93.3M358 87.3V95.8M359 87.3V93.3M360 84.8V93.3M361 87.3V93.3M362 87.3V93.3M363 89.8V93.3M364 84.8V90.8M365 87.3V93.3M366 87.3V93.3M367 87.3V93.3M368 87.3V95.8M369 84.8V93.3M370 84.8V93.3M371 84.8V93.3M372 87.3V95.8M373 89.8V95.8M374 87.3V93.3M375 87.3V93.3M376 35.6V93.3M377 35.6V41.6M378 35.6V44.1M379 35.6V41.6M380 35.6V44.1M381 35.6V41.6M382 35.6V41.6M383 35.6V41.6M384 33.2V41.6M385 33.2V39.2M386 38.1V93.3M387 84.8V93.3M388 87.3V93.3M389 87.3V93.3M390 87.3V95.8M391 87.3V93.3M392 87.3V93.3M393 87.3V93.3M394 84.8V93.3M395 87.3V95.8M396 87.3V95.8M397 87.3V90.8M398 87.3V93.3M399 87.3V93.3M400 84.8V93.3M401 84.8V95.8M402 84.8V95.8M403 84.8V93.3M404 87.3V93.3M405 87.3V95.8M406 87.3V93.3M407 87.3V93.3M408 84.8V95.8M409 87.3V95.8M410 87.3V93.3M411 87.3V95.8M412 87.3V93.3M413 87.3V95.8M414 87.3V93.3M415 87.3V93.3M416 87.3V95.8M417 87.3V93.3M418 84.8V93.3M419 87.3V93.3M420 87.3V93.3M421 87.3V95.8M422 87.3V93.3M423 87.3V93.3M424 84.8V93.3M425 87.3V93.3M426 87.3V93.3M427 38.1V95.8M428 33.2V41.6M429 35.6V39.2M430 35.6V41.6M431 35.6V41.6M432 35.6V41.6M433 35.6V41.6M434 35.6V41.6M435 33.2V41.6M436 33.2V41.6M437 35.6V93.3M438 87.3V95.8M439 87.3V93.3M440 87.3V93.3M441 84.8V93.3M442 84.8V93.3M443 87.3V93.3M444 87.3V95.8M445 87.3V93.3M446 87.3V90.8M447 87.3V93.3M448 89.8V93.3M449 87.3V93.3M450 87.3V95.8M451 84.8V93.3M452 89.8V93.3M453 87.3V93.3M454 89.8V95.8M455 87.3V95.8M456 87.3V93.3M457 87.3V93.3M458 87.3V93.3M459 87.3V93.3M460 87.3V93.3M461 87.3V93.3M462 84.8V95.8M463 87.3V93.3M464 87.3V93.3M465 87.3V93.3M466 84.8V95.8M467 87.3V95.8M468 87.3V93.3M469 87.3V93.3M470 87.3V93.3M471 87.3V93.3M472 84.8V95.8M473 87.3V93.3M474 87.3V93.3M475 84.8V93.3M476 87.3V95.8M477 87.3V93.3M478 87.3V93.3M479 87.3V93.3M480 87.3V90.8M481 87.3V93.3M482 87.3V93.3M483 87.3V95.8M484 87.3V93.3M485 87.3V95.8M486 87.3V93.3M487 87.3V95.8M488 87.3V93.3M489 87.3V93.3M490 87.3V93.3M491 87.3V93.3M492 87.3V93.3M493 87.3V93.3M494 82.4V93.3M495 87.3V93.3M496 87.3V93.3M497 87.3V95.8M498 82.4V95.8M499 82.4V95.8M500 87.3V93.3M501 89.8V93.3M502 87.3V93.3M503 87.3V93.3M504 87.3V95.8M505 84.8V93.3M506 87.3V93.3M507 84.8V93.3M508 87.3V93.3M509 87.3V93.3M510 87.3V93.3M511 89.8V93.3M512 84.8V93.3M513 84.8V95.8M514 84.8V95.8M515 87.3V93.3M516 87.3V93.3M517 87.3V93.3M518 87.3V93.3M519 87.3V93.3M520 84.8V95.8M521 87.3V93.3M522 87.3V93.3M523 87.3V93.3M524 87.3V93.3M525 87.3V93.3M526 87.3V95.8M527 87.3V93.3M528 87.3V93.3M529 87.3V95.8M530 87.3V95.8M531 87.3V93.3M532 87.3V95.8M533 87.3V93.3M534 87.3V93.3M535 87.3V93.3M536 87.3V93.3M537 87.3V93.3M538 84.8V90.8M539 87.3V93.3M540 87.3V93.3M541 87.3V93.3M542 87.3V93.3M543 84.8V93.3M544 84.8V90.8M545 87.3V95.8M546 87.3V93.3M547 87.3V93.3M548 87.3V93.3M549 84.8V93.3M550 87.3V93.3M551 87.3V93.3M552 84.8V95.8M553 87.3V93.3M554 87.3V93.3M555 87.3V95.8M556 87.3V95.8M557 87.3V93.3M558 87.3V93.3M559 87.3V93.3M560 87.3V93.3M561 84.8V90.8M562 87.3V93.3M563 87.3V93.3M564 87.3V93.3M565 84.8V95.8M566 87.3V93.3M567 87.3V93.3M568 84.8V93.3M569 87.3V95.8M570 87.3V93.3M571 84.8V95.8M572 84.8V93.3M573 87.3V93.3M574 87.3V95.8M575 87.3V95.8M576 87.3V95.8M577 89.8V93.3M578 87.3V93.3M579 87.3V93.3M580 87.3V93.3M581 87.3V93.3M582 87.3V95.8M583 87.3V95.8M584 87.3V93.3M585 87.3V93.3M586 87.3V93.3M587 87.3V93.3M588 87.3V93.3M589 87.3V93.3M590 87.3V93.3M591 87.3V93.3M592 87.3V93.3M593 87.3V93.3M594 87.3V93.3M595 87.3V93.3M596 87.3V93.3M597 87.3V95.8M598 87.3V95.8M599 87.3V93.3M600 87.3V95.8M601 87.3V93.3M602 87.3V93.3M603 87.3V93.3M604 87.3V93.3M605 84.8V93.3M606 84.8V93.3M607 84.8V93.3M608 87.3V90.8M609 89.8V93.3M610 87.3V93.3M611 84.8V93.3M612 87.3V93.3M613 84.8V93.3M614 84.8V93.3M615 87.3V93.3M616 87.3V93.3M617 84.8V90.8M618 87.3V93.3M619 87.3V93.3M620 87.3V93.3M621 84.8V95.8M622 89.8V95.8M623 87.3V90.8M624 84.8V93.3M625 87.3V93.3M626 87.3V93.3M627 84.8V93.3M628 87.3V95.8M629 87.3V93.3M630 84.8V95.8M631 87.3V95.8M632 87.3V93.3M633 87.3V93.3M634 87.3V95.8M635 87.3V93.3M636 84.8V93.3M637 87.3V95.8M638 84.8V93.3M639 87.3V93.3M640 84.8V93.3M641 87.3V90.8M642 87.3V93.3M643 87.3V93.3M644 87.3V93.3M645 87.3V93.3M646 87.3V95.8M647 87.3V95.8M648 87.3V93.3M649 87.3V93.3M650 89.8V93.3M651 87.3V93.3M652 87.3V93.3M653 87.3V95.8M654 87.3V93.3M655 87.3V93.3M656 84.8V95.8M657 87.3V95.8M658 84.8V93.3M659 87.3V93.3M660 87.3V93.3M661 87.3V95.8M662 87.3V93.3M663 87.3V95.8M664 87.3V90.8M665 87.3V93.3M666 87.3V90.8M667 87.3V95.8M668 87.3V93.3M669 87.3V95.8M670 87.3V93.3M671 87.3V93.3M672 87.3V95.8M673 87.3V93.3M674 87.3V93.3M675 87.3V93.3M676 87.3V93.3M677 87.3V93.3M678 84.8V93.3M679 84.8V95.8M680 87.3V93.3M681 87.3V95.8M682 87.3V93.3M683 87.3V93.3M684 84.8V93.3M685 84.8V93.3M686 84.8V93.3M687 87.3V93.3M688 87.3V93.3M689 87.3V93.3M690 87.3V93.3M691 87.3V90.8M692 87.3V93.3M693 89.8V93.3M694 87.3V93.3M695 87.3V93.3M696 87.3V93.3M697 87.3V93.3M698 89.8V93.3M699 87.3V95.8M700 87.3V93.3M701 87.3V93.3M702 87.3V93.3M703 87.3V93.3M704 87.3V90.8M705 87.3V93.3M706 87.3V93.3M707 87.3V93.3M708 84.8V95.8M709 87.3V95.8M710 87.3V93.3M711 87.3V93.3M712 84.8V93.3M713 87.3V93.3M714 84.8V95.8M715 84.8V93.3M716 84.8V93.3M717 84.8V93.3M718 87.3V93.3M719 87.3V95.8M720 87.3V93.3M721 87.3V93.3M722 84.8V93.3M723 84.8V93.3M724 87.3V93.3M725 87.3V93.3M726 87.3V93.3M727 87.3V93.3M728 87.3V98.2M729 87.3V93.3M730 87.3V93.3M731 87.3V93.3M732 87.3V95.8M733 87.3V93.3M734 84.8V93.3M735 87.3V93.3M736 84.8V93.3M737 87.3V93.3M738 87.3V93.3M739 87.3V95.8M740 87.3V93.3M741 87.3V95.8M742 87.3V95.8M743 84.8V93.3M744 84.8V93.3M745 84.8V95.8M746 87.3V90.8M747 87.3V93.3M748 82.4V95.8M749 87.3V93.3M750 87.3V93.3M751 89.8V95.8M752 84.8V93.3M753 87.3V93.3M754 87.3V93.3M755 87.3V93.3M756 87.3V93.3M757 84.8V93.3M758 84.8V93.3M759 84.8V93.3M760 87.3V93.3M761 87.3V93.3M762 87.3V93.3M763 89.8V93.3M764 87.3V93.3M765 87.3V93.3M766 87.3V93.3M767 89.8V95.8M768 87.3V93.3M769 87.3V93.3M770 87.3V93.3M771 87.3V93.3M772 84.8V93.3M773 87.3V93.3M774 87.3V93.3M775 84.8V93.3M776 87.3V95.8M777 87.3V90.8M778 87.3V93.3M779 87.3V95.8M780 87.3V95.8M781 87.3V93.3M782 84.8V93.3M783 87.3V93.3M784 87.3V93.3M785 87.3V93.3M786 84.8V93.3M787 87.3V95.8M788 87.3V90.8M789 87.3V93.3M790 87.3V95.8M791 87.3V95.8M792 87.3V93.3M793 87.3V93.3M794 87.3V93.3M795 87.3V93.3M796 84.8V93.3M797 87.3V93.3M798 87.3V93.3M799 87.3V93.3M800 87.3V95.8M801 87.3V93.3M802 87.3V93.3M803 87.3V93.3M804 87.3V93.3M805 84.8V93.3M806 84.8V93.3M807 87.3V93.3M808 87.3V93.3M809 84.8V93.3M810 87.3V95.8M811 84.8V93.3M812 84.8V93.3M813 84.8V93.3M814 87.3V95.8M815 87.3V93.3M816 87.3V93.3M817 87.3V93.3M818 87.3V93.3M819 84.8V95.8M820 84.8V93.3M821 84.8V93.3M822 84.8V95.8M823 84.8V90.8M824 87.3V90.8M825 89.8V93.3M826 89.8V95.8M827 87.3V93.3M828 84.8V90.8M829 87.3V93.3M830 87.3V93.3M831 84.8V93.3M832 84.8V95.8M833 87.3V93.3M834 87.3V93.3M835 89.8V93.3M836 87.3V93.3M837 87.3V93.3M838 89.8V93.3M839 84.8V93.3M840 84.8V95.8M841 87.3V95.8M842 87.3V93.3M843 84.8V93.3M844 87.3V93.3M845 87.3V93.3M846 87.3V95.8M847 87.3V93.3M848 87.3V93.3M849 87.3V95.8M850 84.8V93.3M851 84.8V93.3M852 87.3V95.8M853 87.3V93.3M854 87.3V93.3M855 87.3V93.3M856 87.3V93.3M857 87.3V93.3M858 87.3V93.3M859 84.8V90.8M860 84.8V93.3M861 87.3V93.3M862 87.3V93.3M863 87.3V95.8M864 87.3V93.3M865 87.3V95.8M866 87.3V93.3M867 87.3V93.3M868 87.3V93.3M869 87.3V93.3M870 84.8V93.3M871 87.3V93.3M872 87.3V95.8M873 87.3V93.3M874 87.3V93.3M875 87.3V93.3M876 87.3V93.3M877 84.8V93.3M878 87.3V95.8M879 87.3V93.3M880 87.3V90.8M881 84.8V90.8M882 87.3V93.3M883 87.3V93.3M884 87.3V93.3M885 87.3V93.3M886 84.8V93.3M887 87.3V95.8M888 87.3V95.8M889 87.3V93.3M890 87.3V93.3M891 87.3V93.3M892 84.8V93.3M893 84.8V93.3M894 87.3V93.3M895 87.3V93.3M896 87.3V95.8M897 87.3V95.8M898 87.3V95.8M899 84.8V95.8M900 87.3V93.3M901 87.3V95.8M902 87.3V95.8M903 87.3V93.3M904 87.3V93.3M905 87.3V93.3M906 87.3V93.3M907 87.3V93.3M908 87.3V93.3M909 87.3V90.8M910 87.3V93.3M911 87.3V93.3M912 87.3V93.3M913 87.3V93.3M914 87.3V93.3M915 84.8V93.3M916 87.3V95.8M917 87.3V93.3M918 84.8V90.8M919 87.3V93.3M920 84.8V90.8M921 87.3V93.3M922 87.3V95.8M923 89.8V93.3M924 84.8V93.3M925 87.3V93.3M926 84.8V90.8M927 87.3V93.3M928 87.3V93.3M929 87.3V93.3M930 87.3V93.3M931 84.8V95.8M932 87.3V98.2M933 87.3V93.3M934 87.3V90.8M935 84.8V95.8M936 84.8V93.3M937 89.8V93.3M938 84.8V93.3M939 87.3V95.8M940 87.3V95.8M941 87.3V90.8M942 87.3V93.3M943 87.3V93.3M944 87.3V93.3M945 87.3V93.3M946 87.3V93.3M947 87.3V93.3M948 87.3V95.8M949 87.3V93.3M950 87.3V93.3M951 87.3V93.3M952 87.3V93.3M953 87.3V93.3M954 87.3V95.8M955 87.3V95.8M956 84.8V93.3M957 87.3V95.8M958 87.3V93.3M959 87.3V95.8M960 87.3V93.3M961 87.3V93.3M962 87.3V93.3M963 87.3V90.8M964 87.3V93.3M965 84.8V93.3M966 87.3V95.8M967 87.3V95.8M968 87.3V93.3M969 87.3V93.3M970 84.8V90.8M971 89.8V93.3M972 87.3V93.3M973 87.3V93.3M974 87.3V93.3M975 84.8V93.3M976 87.3V93.3M977 87.3V93.3M978 87.3V93.3M979 87.3V93.3M980 87.3V93.3M981 87.3V93.3M982 87.3V93.3M983 87.3V93.3M984 87.3V93.3M985 87.3V93.3M986 87.3V93.3M987 84.8V93.3M988 87.3V90.8M989 84.8V93.3M990 87.3V93.3M991 84.8V93.3M992 87.3V93.3M993 87.3V93.3M994 84.8V93.3M995 87.3V95.8M996 87.3V90.8M997 87.3V93.3M998 87.3V93.3M999 87.3V90.8M1000 84.8V93.3M1001 87.3V93.3M1002 84.8V93.3M1003 87.3V90.8M1004 84.8V93.3M1005 87.3V93.3M1006 87.3V93.3M1007 87.3V90.8M1008 87.3V95.8M1009 87.3V93.3M1010 87.3V93.3M1011 87.3V93.3M1012 87.3V95.8M1013 87.3V93.3M1014 87.3V93.3M1015 87.3V93.3M1016 87.3V93.3M1017 87.3V93.3M1018 87.3V93.3M1019 87.3V93.3M1020 87.3V93.3M1021 87.3V93.3M1022 89.8V93.3M1023 84.8V93.3M1024 87.3V93.3M1025 87.3V93.3M1026 87.3V93.3M1027 87.3V95.8M1028 87.3V93.3M1029 87.3V93.3M1030 87.3V93.3M1031 87.3V93.3M1032 87.3V93.3M1033 87.3V93.3M1034 87.3V93.3M1035 87.3V95.8M1036 87.3V93.3M1037 87.3V90.8M1038 87.3V90.8M1039 87.3V93.3M1040 87.3V95.8M1041 84.8V95.8M1042 84.8V93.3M1043 84.8V93.3M1044 87.3V95.8M1045 87.3V95.8M1046 87.3V93.3M1047 84.8V93.3M1048 87.3V93.3M1049 87.3V93.3M1050 84.8V93.3M1051 87.3V93.3M1052 84.8V93.3M1053 87.3V93.3M1054 87.3V93.3M1055 84.8V93.3M1056 87.3V93.3M1057 87.3V93.3M1058 87.3V93.3M1059 87.3V93.3M1060 89.8V93.3M1061 87.3V93.3M1062 87.3V93.3M1063 87.3V93.3M1064 84.8V95.8M1065 89.8V93.3M1066 87.3V93.3M1067 87.3V93.3M1068 84.8V93.3M1069 84.8V95.8M1070 89.8V93.3M1071 87.3V90.8M1072 87.3V95.8M1073 89.8V95.8M1074 87.3V95.8M1075 87.3V93.3M1076 87.3V93.3M1077 87.3V95.8M1078 84.8V93.3M1079 84.8V93.3M1080 87.3V95.8M1081 87.3V90.8M1082 87.3V93.3M1083 89.8V93.3M1084 84.8V93.3M1085 87.3V95.8M1086 87.3V93.3M1087 87.3V93.3M1088 87.3V93.3M1089 87.3V93.3M1090 84.8V95.8M1091 87.3V93.3M1092 87.3V93.3M1093 84.8V93.3M1094 87.3V93.3M1095 87.3V93.3M1096 84.8V93.3M1097 84.8V93.3M1098 87.3V93.3M1099 87.3V93.3M1100 87.3V93.3M1101 87.3V95.8M1102 87.3V93.3M1103 84.8V93.3M1104 84.8V93.3M1105 87.3V93.3M1106 87.3V95.8M1107 87.3V93.3M1108 87.3V93.3M1109 87.3V93.3M1110 87.3V93.3M1111 87.3V93.3M1112 89.8V93.3M1113 84.8V93.3M1114 84.8V90.8M1115 87.3V95.8M1116 87.3V93.3M1117 87.3V90.8M1118 84.8V93.3M1119 84.8V93.3M1120 87.3V95.8M1121 84.8V95.8M1122 87.3V90.8M1123 84.8V93.3M1124 87.3V93.3M1125 87.3V93.3M1126 84.8V95.8M1127 87.3V93.3M1128 87.3V93.3M1129 87.3V93.3M1130 87.3V93.3M1131 87.3V93.3M1132 84.8V93.3M1133 87.3V93.3M1134 87.3V93.3M1135 87.3V93.3M1136 84.8V95.8M1137 84.8V93.3M1138 87.3V98.2M1139 87.3V95.8M1140 87.3V95.8M1141 87.3V95.8M1142 84.8V90.8M1143 87.3V95.8M1144 87.3V93.3M1145 87.3V93.3M1146 84.8V93.3M1147 87.3V93.3M1148 87.3V90.8M1149 87.3V93.3M1150 84.8V93.3M1151 87.3V93.3M1152 89.8V93.3M1153 87.3V95.8M1154 87.3V93.3M1155 87.3V90.8M1156 87.3V93.3M1157 82.4V93.3M1158 87.3V95.8M1159 84.8V93.3M1160 87.3V93.3M1161 87.3V93.3M1162 89.8V93.3M1163 84.8V93.3M1164 87.3V93.3M1165 87.3V93.3M1166 87.3V93.3M1167 87.3V93.3M1168 87.3V93.3M1169 84.8V95.8M1170 87.3V95.8M1171 87.3V93.3M1172 87.3V93.3M1173 87.3V93.3M1174 87.3V93.3M1175 87.3V93.3M1176 84.8V93.3M1177 87.3V95.8M1178 87.3V93.3M1179 87.3V93.3M1180 87.3V93.3M1181 87.3V93.3M1182 87.3V93.3M1183 87.3V93.3M1184 87.3V93.3M1185 87.3V93.3M1186 87.3V93.3M1187 84.8V93.3M1188 87.3V93.3M1189 87.3V93.3M1190 87.3V93.3M1191 89.8V95.8M1192 87.3V93.3M1193 84.8V93.3M1194 87.3V93.3M1195 87.3V93.3M1196 87.3V93.3M1197 87.3V93.3M1198 84.8V93.3M1199 87.3V93.3M1200 87.3V95.8M1201 87.3V93.3M1202 87.3V93.3M1203 87.3V93.3M1204 89.6V91M1205 87.3V93.3M1206 87.3V93.3M1207 87.3V93.3M1208 87.3V93.3M1209 84.8V93.3M1210 87.3V93.3M1211 84.8V93.3M1212 84.8V93.3M1213 87.3V93.3M1214 87.3V93.3M1215 87.3V95.8M1216 87.3V93.3M1217 87.3V90.8M1218 87.3V95.8M1219 87.3V95.8M1220 87.3V93.3M1221 87.3V93.3M1222 87.3V95.8M1223 87.3V93.3M1224 87.3V93.3M1225 87.3V95.8M1226 87.3V95.8M1227 87.3V93.3M1228 89.8V93.3M1229 87.3V93.3M1230 87.3V93.3M1231 84.8V93.3M1232 87.3V93.3M1233 87.3V93.3M1234 84.8V95.8M1235 87.3V93.3M1236 87.3V93.3M1237 87.3V93.3M1238 87.3V95.8" stroke="#2418ff" stroke-width="1.35" fill="none" opacity="1"/>
<path d="M263 98V106.5M264 100.5V108.9M265 98V106.5M266 100.5V106.5M267 100.5V108.9M268 100.5V106.5M269 100.5V108.9M270 100.5V108.9M271 100.5V106.5M272 100.5V108.9M273 100.5V106.5M274 102.9V170.5M275 166.9V175.4M276 166.9V172.9M277 166.9V172.9M278 166.9V172.9M279 166.9V172.9M280 164.4V172.9M281 169.3V175.4M282 169.3V172.9M283 166.9V172.9M284 166.9V172.9M285 100.5V172.9M286 100.5V106.5M287 100.5V106.5M288 100.5V106.5M289 100.5V106.5M290 100.5V108.9M291 100.5V106.5M292 98V106.5M293 98V106.5M294 100.5V108.9M295 100.5V108.9M296 100.5V104M297 98V104M298 100.5V106.5M299 100.5V106.5M300 100.5V106.5M301 100.5V106.5M302 100.5V106.5M303 100.5V106.5M304 100.5V106.5M305 100.5V106.5M306 98V106.5M307 98V106.5M308 102.9V106.5M309 98V111.4M310 100.5V108.9M311 100.5V106.5M312 100.5V106.5M313 100.5V106.5M314 98V104M315 100.5V104M316 100.5V108.9M317 98V106.5M318 100.5V106.5M319 100.5V106.5M320 100.5V108.9M321 100.5V106.5M322 98V106.5M323 98V106.5M324 100.5V106.5M325 100.5V172.9M326 166.9V172.9M327 164.4V172.9M328 166.9V175.4M329 166.9V172.9M330 166.9V172.9M331 166.9V172.9M332 164.4V172.9M333 162V175.4M334 166.9V175.4M335 164.4V172.9M336 102.9V172.9M337 100.5V106.5M338 98V106.5M339 100.5V106.5M340 100.5V108.9M341 100.5V106.5M342 100.5V104M343 100.5V106.5M344 100.5V106.5M345 100.5V106.5M346 100.5V106.5M347 100.5V106.5M348 100.5V106.5M349 102.9V106.5M350 100.5V106.5M351 100.5V104M352 100.5V106.5M353 100.5V106.5M354 98V108.9M355 100.5V106.5M356 100.5V108.9M357 100.5V106.5M358 98V106.5M359 100.5V106.5M360 102.9V106.5M361 100.5V106.5M362 100.5V106.5M363 100.5V106.5M364 98V106.5M365 100.5V106.5M366 100.5V106.5M367 100.5V106.5M368 102.9V108.9M369 98V108.9M370 100.5V108.9M371 98V104M372 98V108.9M373 98V106.5M374 100.5V106.5M375 98V106.5M376 100.5V172.9M377 166.9V175.4M378 166.9V175.4M379 166.9V180.3M380 166.9V175.4M381 166.9V172.9M382 166.9V172.9M383 164.4V172.9M384 166.9V172.9M385 166.9V172.9M386 166.9V172.9M387 102.9V172.9M388 100.5V106.5M389 98V106.5M390 100.5V106.5M391 100.5V106.5M392 100.5V106.5M393 100.5V108.9M394 100.5V106.5M395 102.9V108.9M396 98V106.5M397 98V106.5M398 100.5V108.9M399 100.5V106.5M400 100.5V106.5M401 100.5V106.5M402 100.5V106.5M403 100.5V108.9M404 98V108.9M405 100.5V106.5M406 100.5V106.5M407 100.5V106.5M408 100.5V106.5M409 100.5V106.5M410 100.5V106.5M411 100.5V106.5M412 100.5V106.5M413 100.5V106.5M414 100.5V106.5M415 100.5V106.5M416 100.5V106.5M417 100.5V106.5M418 98V106.5M419 100.5V106.5M420 100.5V106.5M421 100.5V106.5M422 100.5V106.5M423 102.9V106.5M424 98V106.5M425 100.5V106.5M426 98V106.5M427 98V172.9M428 166.9V172.9M429 164.4V172.9M430 164.4V172.9M431 166.9V172.9M432 166.9V172.9M433 164.4V172.9M434 166.9V175.4M435 164.4V172.9M436 166.9V172.9M437 102.9V172.9M438 100.5V106.5M439 100.5V108.9M440 102.9V106.5M441 100.5V108.9M442 98V106.5M443 100.5V106.5M444 100.5V175.4M445 166.9V172.9M446 166.9V172.9M447 169.3V172.9M448 166.9V175.4M449 164.4V172.9M450 169.3V172.9M451 166.9V172.9M452 166.9V172.9M453 164.4V172.9M454 166.9V172.9M455 166.9V172.9M456 164.4V175.4M457 166.9V172.9M458 166.9V172.9M459 166.9V172.9M460 166.9V172.9M461 166.9V172.9M462 166.9V175.4M463 166.9V172.9M464 166.9V172.9M465 166.9V172.9M466 166.9V172.9M467 166.9V172.9M468 164.4V172.9M469 164.4V172.9M470 166.9V175.4M471 164.4V172.9M472 164.4V172.9M473 166.9V175.4M474 166.9V175.4M475 164.4V172.9M476 166.9V172.9M477 166.9V172.9M478 166.9V170.5M479 164.4V172.9M480 166.9V170.5M481 166.9V172.9M482 166.9V172.9M483 166.9V175.4M484 166.9V172.9M485 164.4V172.9M486 166.9V172.9M487 166.9V172.9M488 166.9V175.4M489 166.9V172.9M490 166.9V172.9M491 166.9V177.8M492 164.4V172.9M493 166.9V172.9M494 164.4V172.9M495 166.9V172.9M496 166.9V172.9M497 166.9V172.9M498 166.9V172.9M499 164.4V175.4M500 166.9V170.5M501 166.9V175.4M502 166.9V172.9M503 166.9V175.4M504 164.4V172.9M505 166.9V172.9M506 166.9V172.9M507 166.9V172.9M508 166.9V172.9M509 164.4V175.4M510 164.4V175.4M511 166.9V172.9M512 166.9V172.9M513 166.9V172.9M514 166.9V175.4M515 166.9V172.9M516 164.4V172.9M517 166.9V172.9M518 166.9V172.9M519 166.9V172.9M520 169.3V172.9M521 166.9V175.4M522 166.9V172.9M523 166.9V172.9M524 166.9V172.9M525 166.9V170.5M526 166.9V172.9M527 166.9V172.9M528 166.9V172.9M529 164.4V172.9M530 166.9V172.9M531 166.9V170.5M532 166.9V172.9M533 166.9V175.4M534 166.9V172.9M535 166.9V172.9M536 166.9V172.9M537 166.9V172.9M538 164.4V172.9M539 166.9V172.9M540 166.9V172.9M541 169.3V172.9M542 166.9V172.9M543 166.9V172.9M544 166.9V172.9M545 166.9V175.4M546 166.9V172.9M547 166.9V172.9M548 166.9V172.9M549 166.9V175.4M550 166.9V172.9M551 166.9V172.9M552 166.9V172.9M553 166.9V172.9M554 166.9V172.9M555 166.9V172.9M556 166.9V172.9M557 164.4V172.9M558 166.9V172.9M559 166.9V172.9M560 166.9V172.9M561 169.3V172.9M562 166.9V172.9M563 164.4V175.4M564 164.4V172.9M565 166.9V172.9M566 162V172.9M567 164.4V172.9M568 166.9V172.9M569 164.4V175.4M570 166.9V177.8M571 166.9V172.9M572 164.4V172.9M573 166.9V175.4M574 166.9V172.9M575 166.9V172.9M576 166.9V175.4M577 164.4V172.9M578 166.9V172.9M579 166.9V172.9M580 166.9V175.4M581 166.9V175.4M582 164.4V172.9M583 166.9V172.9M584 164.4V172.9M585 164.4V175.4M586 164.4V172.9M587 166.9V170.5M588 166.9V175.4M589 166.9V172.9M590 166.9V170.5M591 166.9V172.9M592 164.4V172.9M593 164.4V175.4M594 164.4V172.9M595 166.9V175.4M596 164.4V172.9M597 164.4V172.9M598 164.4V172.9M599 166.9V170.5M600 166.9V172.9M601 166.9V175.4M602 166.9V172.9M603 166.9V175.4M604 166.9V170.5M605 166.9V172.9M606 164.4V172.9M607 166.9V172.9M608 166.9V172.9M609 166.9V172.9M610 166.9V172.9M611 166.9V172.9M612 166.9V175.4M613 166.9V172.9M614 169.3V175.4M615 164.4V172.9M616 164.4V172.9M617 166.9V172.9M618 166.9V172.9M619 164.4V175.4M620 166.9V172.9M621 166.9V172.9M622 166.9V172.9M623 166.9V172.9M624 164.4V172.9M625 164.4V172.9M626 166.9V172.9M627 166.9V172.9M628 166.9V172.9M629 166.9V172.9M630 166.9V172.9M631 164.4V172.9M632 166.9V172.9M633 166.9V172.9M634 164.4V172.9M635 164.4V172.9M636 166.9V175.4M637 166.9V172.9M638 164.4V175.4M639 164.4V172.9M640 166.9V172.9M641 164.4V175.4M642 164.4V175.4M643 166.9V172.9M644 166.9V172.9M645 164.4V172.9M646 166.9V172.9M647 166.9V172.9M648 166.9V172.9M649 166.9V172.9M650 166.9V172.9M651 166.9V172.9M652 166.9V172.9M653 169.2V170.6M654 166.9V172.9M655 164.4V175.4M656 166.9V172.9M657 166.9V172.9M658 166.9V175.4M659 166.9V175.4M660 164.4V172.9M661 166.9V172.9M662 164.4V175.4M663 164.4V172.9M664 166.9V172.9M665 166.9V172.9M666 164.4V172.9M667 166.9V172.9M668 166.9V175.4M669 166.9V175.4M670 166.9V172.9M671 164.4V172.9M672 166.9V172.9M673 164.4V172.9M674 166.9V172.9M675 166.9V172.9M676 166.9V172.9M677 164.4V177.8M678 166.9V172.9M679 166.9V172.9M680 164.4V175.4M681 166.9V172.9M682 166.9V172.9M683 166.9V172.9M684 166.9V172.9M685 164.4V172.9M686 166.9V172.9M687 166.9V172.9M688 164.4V172.9M689 166.9V175.4M690 164.4V175.4M691 164.4V175.4M692 164.4V175.4M693 166.9V175.4M694 166.9V175.4M695 169.3V175.4M696 166.9V172.9M697 169.3V172.9M698 166.9V172.9M699 166.9V175.4M700 166.9V172.9M701 166.9V172.9M702 164.4V172.9M703 166.9V172.9M704 166.9V172.9M705 164.4V175.4M706 164.4V172.9M707 169.3V175.4M708 166.9V172.9M709 166.9V172.9M710 166.9V172.9M711 166.9V175.4M712 166.9V172.9M713 166.9V172.9M714 164.4V175.4M715 166.9V172.9M716 166.9V172.9M717 166.9V172.9M718 166.9V172.9M719 169.3V172.9M720 166.9V172.9M721 166.9V172.9M722 164.4V175.4M723 164.4V172.9M724 166.9V172.9M725 166.9V172.9M726 166.9V172.9M727 164.4V172.9M728 166.9V172.9M729 166.9V172.9M730 166.9V175.4M731 166.9V172.9M732 166.9V172.9M733 166.9V172.9M734 166.9V172.9M735 166.9V172.9M736 166.9V170.5M737 166.9V172.9M738 166.9V175.4M739 164.4V172.9M740 166.9V172.9M741 166.9V172.9M742 169.3V172.9M743 166.9V175.4M744 166.9V175.4M745 166.9V172.9M746 166.9V172.9M747 166.9V172.9M748 166.9V172.9M749 164.4V172.9M750 166.9V172.9M751 164.4V172.9M752 169.3V172.9M753 164.4V170.5M754 164.4V172.9M755 166.9V172.9M756 166.9V175.4M757 164.4V172.9M758 166.9V172.9M759 166.9V172.9M760 166.9V172.9M761 166.9V172.9M762 166.9V172.9M763 166.9V172.9M764 166.9V175.4M765 166.9V172.9M766 166.9V172.9M767 166.9V175.4M768 166.9V175.4M769 164.4V172.9M770 164.4V172.9M771 166.9V175.4M772 166.9V172.9M773 166.9V172.9M774 166.9V172.9M775 166.9V175.4M776 164.4V175.4M777 166.9V175.4M778 164.4V170.5M779 166.9V172.9M780 166.9V172.9M781 166.9V172.9M782 169.3V172.9M783 166.9V175.4M784 166.9V172.9M785 166.9V172.9M786 166.9V175.4M787 166.9V172.9M788 166.9V172.9M789 166.9V172.9M790 166.9V172.9M791 164.4V172.9M792 164.4V172.9M793 166.9V172.9M794 166.9V172.9M795 166.9V172.9M796 166.9V172.9M797 166.9V172.9M798 166.9V172.9M799 166.9V172.9M800 169.3V172.9M801 166.9V172.9M802 166.9V172.9M803 166.9V172.9M804 166.9V172.9M805 164.4V172.9M806 166.9V172.9M807 166.9V172.9M808 166.9V172.9M809 166.9V172.9M810 166.9V172.9M811 166.9V172.9M812 166.9V172.9M813 166.9V175.4M814 166.9V172.9M815 166.9V172.9M816 164.4V170.5M817 164.4V172.9M818 166.9V175.4M819 166.9V172.9M820 164.4V175.4M821 166.9V172.9M822 166.9V172.9M823 166.9V172.9M824 166.9V172.9M825 164.4V172.9M826 164.4V172.9M827 164.4V172.9M828 166.9V170.5M829 166.9V172.9M830 166.9V172.9M831 166.9V175.4M832 166.9V172.9M833 164.4V172.9M834 164.4V175.4M835 164.4V172.9M836 166.9V175.4M837 166.9V175.4M838 166.9V172.9M839 166.9V175.4M840 164.4V175.4M841 166.9V172.9M842 166.9V175.4M843 169.3V172.9M844 166.9V172.9M845 166.9V172.9M846 166.9V172.9M847 166.9V172.9M848 166.9V172.9M849 166.9V172.9M850 164.4V175.4M851 166.9V175.4M852 166.9V170.5M853 166.9V172.9M854 166.9V172.9M855 166.9V172.9M856 166.9V175.4M857 166.9V172.9M858 166.9V172.9M859 169.3V175.4M860 166.9V172.9M861 169.3V175.4M862 164.4V175.4M863 166.9V172.9M864 166.9V175.4M865 166.9V172.9M866 164.4V175.4M867 166.9V172.9M868 164.4V172.9M869 164.4V172.9M870 166.9V172.9M871 169.3V172.9M872 166.9V175.4M873 166.9V172.9M874 166.9V175.4M875 164.4V172.9M876 166.9V172.9M877 166.9V172.9M878 166.9V172.9M879 164.4V172.9M880 166.9V172.9M881 169.3V175.4M882 166.9V170.5M883 166.9V170.5M884 166.9V172.9M885 166.9V172.9M886 169.3V172.9M887 166.9V172.9M888 166.9V175.4M889 166.9V172.9M890 164.4V175.4M891 166.9V172.9M892 166.9V172.9M893 166.9V172.9M894 162V172.9M895 162V175.4M896 166.9V172.9M897 166.9V172.9M898 166.9V172.9M899 169.3V172.9M900 166.9V172.9M901 166.9V172.9M902 166.9V172.9M903 164.4V172.9M904 166.9V172.9M905 166.9V172.9M906 166.9V172.9M907 166.9V172.9M908 166.9V172.9M909 166.9V172.9M910 166.9V172.9M911 166.9V172.9M912 166.9V172.9M913 166.9V175.4M914 166.9V172.9M915 166.9V172.9M916 164.4V172.9M917 166.9V172.9M918 166.9V175.4M919 164.4V172.9M920 166.9V172.9M921 166.9V172.9M922 164.4V172.9M923 166.9V175.4M924 166.9V172.9M925 166.9V172.9M926 166.9V172.9M927 166.9V172.9M928 164.4V172.9M929 164.4V172.9M930 166.9V172.9M931 164.4V172.9M932 164.4V172.9M933 166.9V175.4M934 166.9V172.9M935 164.4V170.5M936 166.9V172.9M937 164.4V172.9M938 166.9V172.9M939 166.9V175.4M940 166.9V172.9M941 166.9V175.4M942 166.9V172.9M943 166.9V172.9M944 166.9V172.9M945 166.9V172.9M946 166.9V175.4M947 164.4V175.4M948 164.4V172.9M949 164.4V172.9M950 166.9V172.9M951 166.9V175.4M952 169.3V172.9M953 166.9V172.9M954 166.9V175.4M955 164.4V175.4M956 166.9V175.4M957 164.4V170.5M958 166.9V172.9M959 166.9V175.4M960 164.4V172.9M961 166.9V175.4M962 166.9V172.9M963 166.9V175.4M964 166.9V172.9M965 166.9V172.9M966 164.4V172.9M967 166.9V172.9M968 166.9V172.9M969 166.9V172.9M970 166.9V172.9M971 164.4V172.9M972 166.9V172.9M973 164.4V172.9M974 166.9V172.9M975 169.3V172.9M976 166.9V172.9M977 166.9V175.4M978 169.3V172.9M979 166.9V172.9M980 166.9V175.4M981 166.9V175.4M982 166.9V177.8M983 164.4V172.9M984 164.4V172.9M985 164.4V172.9M986 166.9V175.4M987 166.9V172.9M988 166.9V172.9M989 166.9V172.9M990 166.9V172.9M991 166.9V172.9M992 166.9V175.4M993 166.9V172.9M994 166.9V172.9M995 164.4V172.9M996 164.4V172.9M997 164.4V175.4M998 166.9V175.4M999 166.9V172.9M1000 166.9V172.9M1001 166.9V172.9M1002 166.9V170.5M1003 164.4V172.9M1004 166.9V172.9M1005 164.4V172.9M1006 169.3V172.9M1007 166.9V172.9M1008 166.9V175.4M1009 166.9V175.4M1010 169.3V172.9M1011 166.9V172.9M1012 166.9V172.9M1013 164.4V172.9M1014 166.9V172.9M1015 164.4V172.9M1016 164.4V175.4M1017 164.4V172.9M1018 166.9V172.9M1019 169.3V175.4M1020 166.9V172.9M1021 166.9V175.4M1022 166.9V172.9M1023 166.9V175.4M1024 166.9V175.4M1025 166.9V172.9M1026 166.9V175.4M1027 164.4V172.9M1028 166.9V172.9M1029 164.4V172.9M1030 164.4V172.9M1031 164.4V170.5M1032 166.9V172.9M1033 166.9V175.4M1034 166.9V172.9M1035 169.3V172.9M1036 166.9V172.9M1037 166.9V172.9M1038 166.9V172.9M1039 166.9V172.9M1040 166.9V175.4M1041 169.3V172.9M1042 164.4V172.9M1043 166.9V175.4M1044 164.4V175.4M1045 166.9V172.9M1046 166.9V175.4M1047 166.9V172.9M1048 166.9V172.9M1049 164.4V172.9M1050 166.9V172.9M1051 166.9V175.4M1052 166.9V172.9M1053 166.9V175.4M1054 164.4V175.4M1055 166.9V172.9M1056 164.4V175.4M1057 166.9V172.9M1058 166.9V172.9M1059 166.9V172.9M1060 166.9V172.9M1061 166.9V175.4M1062 166.9V172.9M1063 169.3V175.4M1064 162V175.4M1065 164.4V175.4M1066 164.4V175.4M1067 169.3V175.4M1068 166.9V172.9M1069 166.9V172.9M1070 166.9V172.9M1071 164.4V172.9M1072 166.9V175.4M1073 164.4V175.4M1074 164.4V172.9M1075 166.9V172.9M1076 166.9V172.9M1077 166.9V172.9M1078 166.9V172.9M1079 166.9V172.9M1080 166.9V172.9M1081 166.9V175.4M1082 166.9V172.9M1083 164.4V172.9M1084 164.4V172.9M1085 164.4V172.9M1086 166.9V172.9M1087 166.9V170.5M1088 166.9V172.9M1089 166.9V175.4M1090 166.9V172.9M1091 169.3V172.9M1092 164.4V175.4M1093 164.4V172.9M1094 166.9V170.5M1095 166.9V175.4M1096 166.9V172.9M1097 166.9V175.4M1098 166.9V172.9M1099 166.9V172.9M1100 166.9V175.4M1101 166.9V172.9M1102 169.3V172.9M1103 166.9V172.9M1104 166.9V172.9M1105 166.9V170.5M1106 166.9V172.9M1107 162V172.9M1108 166.9V172.9M1109 166.9V172.9M1110 166.9V170.5M1111 166.9V175.4M1112 166.9V175.4M1113 166.9V172.9M1114 166.9V175.4M1115 166.9V172.9M1116 166.9V175.4M1117 166.9V172.9M1118 166.9V175.4M1119 166.9V172.9M1120 164.4V172.9M1121 166.9V172.9M1122 164.4V172.9M1123 166.9V172.9M1124 166.9V172.9M1125 166.9V172.9M1126 166.9V172.9M1127 164.4V172.9M1128 166.9V172.9M1129 164.4V172.9M1130 166.9V175.4M1131 164.4V172.9M1132 166.9V175.4M1133 166.9V172.9M1134 166.9V172.9M1135 164.4V172.9M1136 166.9V172.9M1137 166.9V172.9M1138 166.9V170.5M1139 166.9V172.9M1140 166.9V172.9M1141 166.9V172.9M1142 166.9V172.9M1143 166.9V172.9M1144 166.9V172.9M1145 164.4V172.9M1146 166.9V172.9M1147 166.9V172.9M1148 166.9V172.9M1149 166.9V175.4M1150 166.9V175.4M1151 166.9V172.9M1152 166.9V172.9M1153 166.9V172.9M1154 166.9V170.5M1155 166.9V172.9M1156 164.4V172.9M1157 164.4V170.5M1158 166.9V175.4M1159 164.4V172.9M1160 164.4V172.9M1161 166.9V172.9M1162 166.9V172.9M1163 166.9V172.9M1164 166.9V172.9M1165 166.9V170.5M1166 166.9V170.5M1167 166.9V172.9M1168 166.9V172.9M1169 166.9V172.9M1170 164.4V172.9M1171 166.9V172.9M1172 164.4V172.9M1173 164.4V172.9M1174 166.9V172.9M1175 166.9V172.9M1176 164.4V172.9M1177 164.4V172.9M1178 166.9V172.9M1179 166.9V172.9M1180 166.9V172.9M1181 166.9V175.4M1182 164.4V172.9M1183 166.9V175.4M1184 166.9V175.4M1185 164.4V172.9M1186 166.9V172.9M1187 169.3V172.9M1188 166.9V172.9M1189 166.9V172.9M1190 166.9V175.4M1191 166.9V172.9M1192 166.9V172.9M1193 166.9V172.9M1194 164.4V172.9M1195 166.9V175.4M1196 166.9V172.9M1197 166.9V175.4M1198 166.9V172.9M1199 164.4V172.9M1200 166.9V172.9M1201 164.4V172.9M1202 164.4V172.9M1203 166.9V172.9M1204 166.9V172.9M1205 164.4V175.4M1206 166.9V175.4M1207 166.9V172.9M1208 166.9V172.9M1209 166.9V172.9M1210 166.9V172.9M1211 166.9V172.9M1212 166.9V172.9M1213 166.9V172.9M1214 166.9V172.9M1215 164.4V172.9M1216 166.9V172.9M1217 166.9V172.9M1218 166.9V172.9M1219 166.9V172.9M1220 166.9V175.4M1221 166.9V172.9M1222 166.9V172.9M1223 166.9V172.9M1224 164.4V175.4M1225 164.4V175.4M1226 166.9V172.9M1227 164.4V172.9M1228 166.9V175.4M1229 166.9V172.9M1230 164.4V172.9M1231 166.9V172.9M1232 164.4V172.9M1233 166.9V170.5M1234 164.4V172.9M1235 166.9V172.9M1236 166.9V172.9M1237 166.9V172.9M1238 166.9V172.9" stroke="#ff1414" stroke-width="1.35" fill="none" opacity="1"/>
<path d="M263 275V283.5M264 275V290.9M265 277.5V288.4M266 279.9V290.9M267 279.9V293.3M268 287.3V298.3M269 284.9V295.8M270 289.8V300.7M271 287.3V300.7M272 292.2V303.2M273 294.7V305.6M274 299.6V308.1M275 297.2V308.1M276 294.7V308.1M277 287.3V298.3M278 279.9V295.8M279 272.6V281M280 262.7V276.1M281 255.3V266.3M282 245.5V258.9M283 238.1V249.1M284 235.6V244.1M285 223.3V239.2M286 218.4V226.9M287 218.4V224.4M288 218.4V226.9M289 218.4V231.8M290 223.3V234.3M291 223.3V236.7M292 225.8V236.7M293 228.3V236.7M294 228.3V239.2M295 228.3V241.7M296 233.2V241.7M297 233.2V241.7M298 233.2V246.6M299 238.1V246.6M300 240.6V246.6M301 240.6V251.5M302 240.6V251.5M303 243V254M304 245.5V256.4M305 248V256.4M306 250.4V258.9M307 252.9V266.3M308 252.9V261.4M309 252.9V263.8M310 257.8V266.3M311 257.8V266.3M312 262.7V268.7M313 260.3V271.2M314 265.2V273.7M315 260.3V273.7M316 265.2V276.1M317 267.6V276.1M318 267.6V278.6M319 270.1V278.6M320 270.1V283.5M321 272.6V283.5M322 272.6V286M323 279.9V286M324 282.4V288.4M325 282.4V290.9M326 279.9V290.9M327 277.5V290.9M328 270.1V281M329 260.3V271.2M330 255.3V263.8M331 248V258.9M332 240.6V254M333 233.2V244.1M334 223.3V241.7M335 218.4V229.4M336 211V226.9M337 206.1V219.5M338 206.1V217.1M339 206.1V219.5M340 211V222M341 211V224.4M342 216V222M343 216V222M344 218.4V229.4M345 220.9V226.9M346 218.4V231.8M347 223.3V234.3M348 223.3V231.8M349 225.8V236.7M350 228.3V236.7M351 228.3V239.2M352 228.3V239.2M353 230.7V239.2M354 233.2V244.1M355 235.6V244.1M356 235.6V244.1M357 238.1V246.6M358 238.1V249.1M359 243V249.1M360 245.5V254M361 245.5V254M362 245.5V256.4M363 250.4V258.9M364 248V261.4M365 252.9V258.9M366 250.4V261.4M367 255.3V261.4M368 252.9V266.3M369 257.8V271.2M370 262.7V271.2M371 260.3V273.7M372 265.2V271.2M373 262.7V271.2M374 267.6V273.7M375 267.6V278.6M376 270.1V281M377 272.6V278.6M378 262.7V273.7M379 255.3V268.7M380 248V261.4M381 238.1V254M382 235.6V244.1M383 225.8V239.2M384 218.4V229.4M385 211V224.4M386 203.7V217.1M387 196.3V207.2M388 191.4V204.8M389 191.4V199.8M390 191.4V202.3M391 191.4V209.7M392 196.3V202.3M393 201.2V207.2M394 198.7V212.1M395 201.2V209.7M396 201.2V212.1M397 203.7V212.1M398 201.2V214.6M399 208.6V217.1M400 208.6V222M401 208.6V222M402 211V222M403 216V224.4M404 213.5V226.9M405 216V226.9M406 220.9V231.8M407 220.9V231.8M408 220.9V231.8M409 225.8V231.8M410 228.3V231.8M411 228.3V239.2M412 225.8V236.7M413 233.2V241.7M414 235.6V241.7M415 230.7V244.1M416 235.6V244.1M417 238.1V246.6M418 238.1V249.1M419 240.6V249.1M420 240.6V251.5M421 243V251.5M422 248V254M423 248V254M424 250.4V258.9M425 252.9V258.9M426 252.9V263.8M427 255.3V263.8M428 257.8V266.3M429 248V263.8M430 243V251.5M431 235.6V246.6M432 228.3V239.2M433 225.8V229.4M434 213.5V226.9M435 208.6V219.5M436 198.7V214.6M437 191.4V207.2M438 186.4V199.8M439 181.5V192.5M440 184V192.5M441 186.4V192.5M442 186.4V194.9M443 186.4V197.4M444 186.4V197.4M445 191.4V197.4M446 186.4V199.8M447 184V197.4M448 186.4V199.8M449 193.8V202.3M450 196.3V204.8M451 196.3V204.8M452 196.3V207.2M453 198.7V207.2M454 198.7V209.7M455 198.7V209.7M456 201.2V212.1M457 201.2V212.1M458 201.2V217.1M459 203.7V214.6M460 203.7V217.1M461 206.1V217.1M462 208.6V217.1M463 203.7V222M464 211V222M465 211V222M466 213.5V224.4M467 213.5V222M468 213.5V224.4M469 213.5V224.4M470 216V226.9M471 218.4V231.8M472 216V231.8M473 220.9V229.4M474 220.9V231.8M475 223.3V231.8M476 220.9V229.4M477 225.8V234.3M478 225.8V236.7M479 225.8V244.1M480 238.1V249.1M481 243V254M482 248V261.4M483 255.3V271.2M484 262.7V273.7M485 265.2V281M486 275V288.4M487 282.4V293.3M488 289.8V300.7M489 292.2V300.7M490 289.8V300.7M491 292.2V303.2M492 292.2V300.7M493 294.7V303.2M494 294.7V305.6M495 297.2V308.1M496 292.2V303.2M497 292.2V303.2M498 294.7V308.1M499 294.7V308.1M500 294.7V308.1M501 297.2V308.1M502 297.2V305.6M503 297.2V305.6M504 297.2V310.6M505 297.2V308.1M506 294.7V308.1M507 294.7V305.6M508 297.2V305.6M509 292.2V308.1M510 297.2V308.1M511 299.6V308.1M512 297.2V308.1M513 299.6V310.6M514 297.2V310.6M515 302.1V310.6M516 297.2V313M517 299.6V310.6M518 299.6V313M519 302.1V313M520 299.6V310.6M521 302.1V313M522 302.1V310.6M523 302.1V313M524 302.1V313M525 304.5V313M526 304.5V315.5M527 302.1V315.5M528 304.5V315.5M529 307V317.9M530 311.9V327.8M531 316.8V330.2M532 324.2V337.6M533 331.6V345M534 341.4V349.9M535 343.9V357.3M536 353.7V364.7M537 361.1V372.1M538 363.6V374.5M539 368.5V377M540 368.5V379.5M541 371V379.5M542 366V379.5M543 371V379.5M544 371V381.9M545 371V384.4M546 373.4V381.9M547 373.4V384.4M548 375.9V386.8M549 375.9V389.3M550 378.4V389.3M551 378.4V389.3M552 380.8V391.8M553 380.8V394.2M554 383.3V391.8M555 383.3V394.2M556 385.7V396.7M557 385.7V394.2M558 385.7V391.8M559 385.7V394.2M560 388.2V394.2M561 390.7V399.1M562 390.7V404.1M563 390.7V399.1M564 388.2V401.6M565 393.1V404.1M566 393.1V401.6M567 393.1V406.5M568 390.7V406.5M569 395.6V404.1M570 398V406.5M571 398V406.5M572 398V409M573 398V409M574 398V411.4M575 403V409M576 405.4V413.9M577 405.4V413.9M578 400.5V413.9M579 403V416.4M580 405.4V413.9M581 407.9V418.8M582 407.9V426.2M583 415.3V428.7M584 412.8V431.1M585 410.3V426.2M586 415.3V428.7M587 415.3V426.2M588 415.3V426.2M589 415.3V428.7M590 415.3V426.2M591 417.7V428.7M592 412.8V433.6M593 415.3V428.7M594 407.9V428.7M595 415.3V428.7M596 415.3V431.1M597 412.8V428.7M598 415.3V428.7M599 412.8V426.2M600 417.7V431.1M601 417.7V423.7M602 412.8V426.2M603 410.3V428.7M604 415.3V428.7M605 417.7V428.7M606 410.3V433.6M607 415.3V426.2M608 415.3V423.7M609 412.8V426.2M610 415.3V426.2M611 412.8V431.1M612 412.8V426.2M613 415.3V431.1M614 415.3V428.7M615 415.3V428.7M616 415.3V431.1M617 415.3V431.1M618 415.3V428.7M619 407.9V428.7M620 410.3V428.7M621 412.8V426.2M622 412.8V428.7M623 412.8V426.2M624 415.3V428.7M625 412.8V423.7M626 415.3V426.2M627 417.7V428.7M628 417.7V428.7M629 417.7V426.2M630 417.7V426.2M631 415.3V423.7M632 420.2V428.7M633 412.8V426.2M634 417.7V428.7M635 415.3V428.7M636 410.3V428.7M637 417.7V428.7M638 412.8V426.2M639 415.3V426.2M640 415.3V428.7M641 415.3V428.7M642 415.3V428.7M643 415.3V426.2M644 412.8V423.7M645 417.7V426.2M646 412.8V426.2M647 412.8V426.2M648 412.8V423.7M649 417.7V428.7M650 412.8V428.7M651 412.8V426.2M652 412.8V431.1M653 415.3V428.7M654 417.7V431.1M655 412.8V428.7M656 412.8V428.7M657 417.7V428.7M658 417.7V428.7M659 410.3V426.2M660 415.3V428.7M661 415.3V426.2M662 415.3V426.2M663 415.3V431.1M664 415.3V426.2M665 412.8V426.2M666 412.8V433.6M667 417.7V431.1M668 407.9V428.7M669 420.2V428.7M670 417.7V423.7M671 415.3V423.7M672 415.3V428.7M673 415.3V428.7M674 410.3V428.7M675 415.3V426.2M676 410.3V428.7M677 412.8V426.2M678 412.8V426.2M679 417.7V426.2M680 412.8V431.1M681 417.7V431.1M682 415.3V428.7M683 412.8V428.7M684 415.3V426.2M685 412.8V428.7M686 415.3V428.7M687 415.3V426.2M688 415.3V428.7M689 420.2V428.7M690 412.8V426.2M691 412.8V428.7M692 412.8V426.2M693 415.3V428.7M694 415.3V428.7M695 410.3V428.7M696 410.3V433.6M697 412.8V431.1M698 415.3V433.6M699 415.3V426.2M700 415.3V428.7M701 412.8V426.2M702 412.8V426.2M703 412.8V428.7M704 412.8V426.2M705 415.3V426.2M706 412.8V426.2M707 415.3V428.7M708 412.8V431.1M709 417.7V426.2M710 412.8V426.2M711 412.8V426.2M712 410.3V428.7M713 410.3V431.1M714 412.8V423.7M715 417.7V428.7M716 415.3V433.6M717 415.3V423.7M718 412.8V423.7M719 412.8V428.7M720 410.3V431.1M721 410.3V426.2M722 417.7V428.7M723 412.8V431.1M724 415.3V426.2M725 415.3V431.1M726 415.3V431.1M727 415.3V431.1M728 412.8V433.6M729 417.7V428.7M730 407.9V423.7M731 417.7V426.2M732 415.3V428.7M733 415.3V423.7M734 412.8V428.7M735 417.7V428.7M736 415.3V426.2M737 417.7V426.2M738 415.3V423.7M739 412.8V426.2M740 412.8V428.7M741 417.7V428.7M742 415.3V428.7M743 417.7V428.7M744 420.2V433.6M745 407.9V428.7M746 415.3V431.1M747 415.3V428.7M748 412.8V428.7M749 417.7V428.7M750 412.8V431.1M751 407.9V426.2M752 417.7V423.7M753 417.7V433.6M754 415.3V426.2M755 417.7V428.7M756 415.3V426.2M757 415.3V428.7M758 415.3V426.2M759 417.7V428.7M760 417.7V431.1M761 412.8V426.2M762 415.3V428.7M763 415.3V428.7M764 410.3V426.2M765 412.8V426.2M766 410.3V431.1M767 412.8V428.7M768 417.7V426.2M769 415.3V428.7M770 415.3V428.7M771 417.7V431.1M772 412.8V423.7M773 415.3V431.1M774 415.3V426.2M775 412.8V426.2M776 415.3V433.6M777 412.8V426.2M778 415.3V423.7M779 415.3V423.7M780 417.7V426.2M781 417.7V428.7M782 415.3V428.7M783 410.3V426.2M784 410.3V426.2M785 415.3V426.2M786 417.7V426.2M787 417.7V428.7M788 412.8V431.1M789 417.7V426.2M790 412.8V428.7M791 417.7V428.7M792 417.7V426.2M793 417.7V426.2M794 417.7V426.2M795 415.3V428.7M796 415.3V428.7M797 412.8V428.7M798 407.9V428.7M799 415.3V426.2M800 412.8V426.2M801 417.7V426.2M802 415.3V431.1M803 417.7V431.1M804 415.3V426.2M805 412.8V426.2M806 412.8V431.1M807 417.7V431.1M808 412.8V428.7M809 412.8V431.1M810 415.3V431.1M811 412.8V428.7M812 412.8V426.2M813 415.3V426.2M814 415.3V426.2M815 415.3V426.2M816 417.7V426.2M817 417.7V423.7M818 415.3V431.1M819 412.8V426.2M820 412.8V428.7M821 412.8V431.1M822 412.8V423.7M823 417.7V426.2M824 415.3V428.7M825 417.7V428.7M826 415.3V426.2M827 415.3V431.1M828 415.3V428.7M829 415.3V426.2M830 407.9V426.2M831 415.3V428.7M832 417.7V428.7M833 412.8V426.2M834 412.8V423.7M835 415.3V426.2M836 417.7V426.2M837 415.3V428.7M838 415.3V428.7M839 417.7V428.7M840 415.3V428.7M841 412.8V431.1M842 412.8V428.7M843 412.8V426.2M844 415.3V428.7M845 412.8V426.2M846 410.3V423.7M847 412.8V428.7M848 415.3V431.1M849 412.8V428.7M850 415.3V431.1M851 415.3V426.2M852 412.8V431.1M853 412.8V428.7M854 412.8V431.1M855 412.8V428.7M856 420.2V428.7M857 417.7V433.6M858 412.8V433.6M859 410.3V431.1M860 417.7V426.2M861 415.3V426.2M862 415.3V428.7M863 412.8V428.7M864 410.3V428.7M865 417.7V426.2M866 415.3V428.7M867 412.8V428.7M868 412.8V428.7M869 415.3V431.1M870 412.8V426.2M871 415.3V423.7M872 407.9V426.2M873 412.8V423.7M874 415.3V426.2M875 412.8V428.7M876 415.3V428.7M877 412.8V426.2M878 417.7V431.1M879 415.3V428.7M880 412.8V428.7M881 412.8V428.7M882 412.8V426.2M883 412.8V433.6M884 415.3V428.7M885 417.7V431.1M886 415.3V423.7M887 412.8V428.7M888 417.7V428.7M889 412.8V428.7M890 417.7V426.2M891 412.8V428.7M892 417.7V428.7M893 415.3V431.1M894 412.8V426.2M895 415.3V428.7M896 412.8V426.2M897 417.7V426.2M898 415.3V431.1M899 415.3V426.2M900 415.3V428.7M901 412.8V431.1M902 412.8V428.7M903 412.8V428.7M904 415.3V428.7M905 417.7V431.1M906 415.3V428.7M907 415.3V426.2M908 415.3V426.2M909 417.7V423.7M910 415.3V431.1M911 415.3V431.1M912 415.3V436M913 415.3V431.1M914 405.4V428.7M915 417.7V428.7M916 410.3V433.6M917 412.8V428.7M918 417.7V433.6M919 412.8V428.7M920 412.8V433.6M921 420.2V428.7M922 415.3V428.7M923 417.7V428.7M924 412.8V426.2M925 417.7V428.7M926 412.8V421.3M927 412.8V426.2M928 412.8V428.7M929 412.8V433.6M930 412.8V428.7M931 415.3V431.1M932 412.8V428.7M933 412.8V423.7M934 415.3V426.2M935 415.3V426.2M936 417.7V426.2M937 415.3V423.7M938 415.3V431.1M939 417.7V426.2M940 415.3V428.7M941 417.7V426.2M942 417.7V431.1M943 417.7V431.1M944 415.3V428.7M945 415.3V428.7M946 415.3V428.7M947 412.8V426.2M948 415.3V428.7M949 415.3V426.2M950 415.3V426.2M951 412.8V426.2M952 415.3V428.7M953 415.3V426.2M954 415.3V426.2M955 415.3V426.2M956 415.3V431.1M957 415.3V428.7M958 415.3V428.7M959 415.3V428.7M960 415.3V431.1M961 412.8V431.1M962 415.3V428.7M963 415.3V426.2M964 417.7V431.1M965 417.7V426.2M966 417.7V428.7M967 415.3V428.7M968 412.8V428.7M969 415.3V426.2M970 410.3V431.1M971 410.3V428.7M972 415.3V428.7M973 412.8V428.7M974 417.7V433.6M975 412.8V426.2M976 412.8V423.7M977 417.7V428.7M978 412.8V428.7M979 412.8V431.1M980 415.3V431.1M981 417.7V428.7M982 420.2V428.7M983 415.3V433.6M984 417.7V428.7M985 412.8V426.2M986 415.3V426.2M987 415.3V431.1M988 412.8V426.2M989 417.7V426.2M990 415.3V426.2M991 412.8V426.2M992 407.9V431.1M993 410.3V431.1M994 415.3V431.1M995 415.3V428.7M996 417.7V426.2M997 417.7V428.7M998 417.7V428.7M999 415.3V428.7M1000 412.8V428.7M1001 412.8V426.2M1002 412.8V431.1M1003 410.3V428.7M1004 415.3V428.7M1005 412.8V426.2M1006 412.8V426.2M1007 415.3V423.7M1008 412.8V428.7M1009 415.3V426.2M1010 415.3V423.7M1011 415.3V428.7M1012 420.2V431.1M1013 415.3V431.1M1014 415.3V428.7M1015 417.7V431.1M1016 417.7V428.7M1017 415.3V428.7M1018 417.7V428.7M1019 417.7V426.2M1020 415.3V433.6M1021 415.3V433.6M1022 415.3V433.6M1023 415.3V428.7M1024 415.3V426.2M1025 417.7V428.7M1026 410.3V426.2M1027 412.8V426.2M1028 417.7V428.7M1029 412.8V428.7M1030 407.9V433.6M1031 415.3V426.2M1032 415.3V426.2M1033 417.7V428.7M1034 417.7V426.2M1035 417.7V426.2M1036 415.3V431.1M1037 412.8V431.1M1038 412.8V431.1M1039 412.8V431.1M1040 407.9V426.2M1041 407.9V428.7M1042 415.3V423.7M1043 412.8V426.2M1044 415.3V426.2M1045 412.8V426.2M1046 417.7V431.1M1047 415.3V431.1M1048 415.3V426.2M1049 415.3V428.7M1050 417.7V428.7M1051 417.7V426.2M1052 412.8V428.7M1053 412.8V428.7M1054 415.3V426.2M1055 417.7V426.2M1056 412.8V431.1M1057 412.8V431.1M1058 417.7V428.7M1059 417.7V428.7M1060 417.7V428.7M1061 415.3V428.7M1062 412.8V428.7M1063 415.3V428.7M1064 415.3V431.1M1065 415.3V431.1M1066 407.9V426.2M1067 412.8V428.7M1068 410.3V428.7M1069 412.8V431.1M1070 407.9V426.2M1071 415.3V426.2M1072 415.3V428.7M1073 417.7V428.7M1074 417.7V426.2M1075 415.3V428.7M1076 415.3V426.2M1077 415.3V426.2M1078 415.3V428.7M1079 415.3V431.1M1080 415.3V428.7M1081 415.3V433.6M1082 415.3V428.7M1083 417.7V428.7M1084 415.3V426.2M1085 415.3V428.7M1086 412.8V428.7M1087 415.3V426.2M1088 412.8V426.2M1089 412.8V428.7M1090 415.3V428.7M1091 410.3V428.7M1092 412.8V426.2M1093 415.3V431.1M1094 417.7V431.1M1095 415.3V428.7M1096 417.7V428.7M1097 412.8V426.2M1098 415.3V426.2M1099 412.8V423.7M1100 417.7V431.1M1101 415.3V428.7M1102 412.8V426.2M1103 417.7V428.7M1104 415.3V426.2M1105 415.3V428.7M1106 415.3V431.1M1107 412.8V431.1M1108 412.8V431.1M1109 412.8V428.7M1110 417.7V431.1M1111 417.7V426.2M1112 415.3V428.7M1113 410.3V431.1M1114 410.3V428.7M1115 417.7V431.1M1116 412.8V428.7M1117 407.9V428.7M1118 412.8V428.7M1119 412.8V428.7M1120 415.3V428.7M1121 417.7V426.2M1122 417.7V428.7M1123 412.8V433.6M1124 417.7V428.7M1125 417.7V426.2M1126 415.3V428.7M1127 415.3V428.7M1128 415.3V428.7M1129 417.7V428.7M1130 417.7V428.7M1131 410.3V426.2M1132 412.8V428.7M1133 415.3V428.7M1134 407.9V428.7M1135 407.9V426.2M1136 417.7V423.7M1137 415.3V426.2M1138 415.3V428.7M1139 415.3V431.1M1140 415.3V428.7M1141 415.3V426.2M1142 412.8V431.1M1143 412.8V426.2M1144 415.3V428.7M1145 412.8V431.1M1146 415.3V426.2M1147 415.3V423.7M1148 412.8V428.7M1149 417.7V426.2M1150 417.7V426.2M1151 412.8V423.7M1152 417.7V428.7M1153 415.3V426.2M1154 415.3V428.7M1155 417.7V426.2M1156 415.3V426.2M1157 412.8V431.1M1158 415.3V428.7M1159 410.3V428.7M1160 407.9V428.7M1161 417.7V428.7M1162 415.3V431.1M1163 415.3V428.7M1164 417.7V428.7M1165 415.3V426.2M1166 412.8V428.7M1167 417.7V426.2M1168 415.3V428.7M1169 415.3V428.7M1170 410.3V428.7M1171 410.3V426.2M1172 417.7V426.2M1173 412.8V426.2M1174 412.8V431.1M1175 417.7V428.7M1176 412.8V423.7M1177 415.3V426.2M1178 410.3V426.2M1179 415.3V428.7M1180 412.8V426.2M1181 410.3V426.2M1182 412.8V426.2M1183 415.3V428.7M1184 412.8V426.2M1185 410.3V426.2M1186 412.8V426.2M1187 417.7V426.2M1188 417.7V426.2M1189 417.7V431.1M1190 412.8V423.7M1191 412.8V423.7M1192 415.3V423.7M1193 410.3V428.7M1194 417.7V428.7M1195 415.3V428.7M1196 415.3V426.2M1197 407.9V428.7M1198 415.3V431.1M1199 415.3V428.7M1200 420.2V428.7M1201 415.3V426.2M1202 415.3V426.2M1203 412.8V423.7M1204 415.3V426.2M1205 417.7V431.1M1206 412.8V426.2M1207 410.3V426.2M1208 417.7V426.2M1209 410.3V428.7M1210 412.8V426.2M1211 415.3V431.1M1212 415.3V423.7M1213 412.8V428.7M1214 415.3V428.7M1215 412.8V428.7M1216 412.8V426.2M1217 415.3V431.1M1218 415.3V426.2M1219 412.8V426.2M1220 412.8V428.7M1221 412.8V426.2M1222 417.7V428.7M1223 417.7V428.7M1224 417.7V428.7M1225 417.7V431.1M1226 412.8V428.7M1227 415.3V426.2M1228 415.3V428.7M1229 417.7V431.1M1230 415.3V428.7M1231 417.7V428.7M1232 417.7V426.2M1233 412.8V426.2M1234 410.3V428.7M1235 412.8V428.7M1236 412.8V426.2M1237 417.7V431.1M1238 415.3V426.2" stroke="#ff20ff" stroke-width="1.35" fill="none" opacity="1"/>
<path d="M263 561.8V572.8M264 559.4V567.8M265 559.4V565.4M266 559.4V567.8M267 559.4V567.8M268 556.9V567.8M269 556.9V567.8M270 559.4V567.8M271 559.4V570.3M272 561.8V567.8M273 556.9V567.8M274 556.9V567.8M275 195.2V582.6M276 195.2V198.8M277 195.2V203.7M278 192.8V201.2M279 190.3V201.2M280 195.2V203.7M281 195.2V203.7M282 192.8V201.2M283 192.8V203.7M284 195.2V203.7M285 192.8V201.2M286 200.1V575.2M287 556.9V567.8M288 559.4V565.4M289 556.9V567.8M290 556.9V567.8M291 561.8V567.8M292 559.4V567.8M293 559.4V565.4M294 559.4V567.8M295 559.4V567.8M296 559.4V565.4M297 559.4V567.8M298 559.4V567.8M299 559.4V570.3M300 559.4V565.4M301 556.9V567.8M302 559.4V567.8M303 554.4V567.8M304 559.4V570.3M305 556.9V567.8M306 561.8V567.8M307 559.4V570.3M308 559.4V567.8M309 559.4V567.8M310 554.4V570.3M311 559.4V570.3M312 559.4V567.8M313 556.9V567.8M314 556.9V567.8M315 559.4V570.3M316 559.4V567.8M317 559.4V567.8M318 559.4V565.4M319 559.4V565.4M320 559.4V565.4M321 556.9V565.4M322 559.4V567.8M323 559.4V565.4M324 561.8V567.8M325 559.4V565.4M326 195.2V592.4M327 195.2V201.2M328 192.8V201.2M329 195.2V201.2M330 195.2V201.2M331 195.2V201.2M332 192.8V201.2M333 195.2V201.2M334 192.8V201.2M335 195.2V201.2M336 192.8V203.7M337 197.7V585.1M338 559.4V567.8M339 561.8V567.8M340 559.4V567.8M341 559.4V567.8M342 556.9V567.8M343 556.9V567.8M344 559.4V567.8M345 559.4V567.8M346 559.4V567.8M347 561.8V567.8M348 559.4V567.8M349 561.8V567.8M350 561.8V567.8M351 559.4V567.8M352 559.4V570.3M353 559.4V570.3M354 559.4V567.8M355 559.4V567.8M356 559.4V567.8M357 561.8V565.4M358 556.9V567.8M359 559.4V567.8M360 559.4V567.8M361 556.9V570.3M362 556.9V565.4M363 556.9V567.8M364 559.4V567.8M365 556.9V567.8M366 559.4V567.8M367 561.8V565.4M368 559.4V565.4M369 556.9V570.3M370 561.8V567.8M371 556.9V570.3M372 556.9V565.4M373 556.9V567.8M374 556.9V570.3M375 559.4V567.8M376 559.4V567.8M377 190.3V585.1M378 195.2V198.8M379 195.2V201.2M380 195.2V198.8M381 195.2V203.7M382 192.8V203.7M383 192.8V201.2M384 192.8V201.2M385 195.2V201.2M386 192.8V198.8M387 192.8V201.2M388 195.2V580.1M389 559.4V565.4M390 559.4V567.8M391 561.8V567.8M392 561.8V565.4M393 559.4V570.3M394 559.4V570.3M395 559.4V567.8M396 556.9V567.8M397 559.4V567.8M398 559.4V567.8M399 561.8V567.8M400 561.8V570.3M401 559.4V570.3M402 561.8V570.3M403 561.8V567.8M404 556.9V567.8M405 561.8V567.8M406 559.4V570.3M407 561.8V570.3M408 559.4V565.4M409 561.8V567.8M410 559.4V567.8M411 559.4V570.3M412 559.4V570.3M413 556.9V567.8M414 556.9V567.8M415 556.9V572.8M416 556.9V567.8M417 556.9V567.8M418 559.4V567.8M419 559.4V567.8M420 559.4V567.8M421 559.4V565.4M422 559.4V565.4M423 559.4V567.8M424 561.8V567.8M425 556.9V565.4M426 559.4V565.4M427 559.4V567.8M428 195.2V587.5M429 195.2V201.2M430 190.3V201.2M431 192.8V203.7M432 195.2V203.7M433 192.8V203.7M434 195.2V203.7M435 192.8V203.7M436 195.2V201.2M437 190.3V201.2M438 192.8V198.8M439 192.8V592.4M440 559.4V567.8M441 559.4V567.8M442 556.9V565.4M443 559.4V570.3M444 556.9V567.8M445 559.4V567.8M446 556.9V565.4M447 559.4V567.8M448 559.4V565.4M449 559.4V565.4M450 559.4V567.8M451 559.4V567.8M452 559.4V567.8M453 559.4V567.8M454 559.4V567.8M455 559.4V565.4M456 559.4V565.4M457 556.9V567.8M458 559.4V567.8M459 559.4V565.4M460 559.4V567.8M461 556.9V570.3M462 559.4V567.8M463 559.4V567.8M464 559.4V567.8M465 559.4V567.8M466 559.4V570.3M467 561.8V567.8M468 559.4V567.8M469 559.4V567.8M470 559.4V567.8M471 559.4V567.8M472 559.4V567.8M473 556.9V565.4M474 559.4V567.8M475 561.8V570.3M476 559.4V567.8M477 561.8V567.8M478 556.9V567.8M479 561.8V570.3M480 559.4V567.8M481 561.8V567.8M482 561.8V565.4M483 559.4V567.8M484 559.4V567.8M485 559.4V565.4M486 561.8V570.3M487 561.8V567.8M488 559.4V565.4M489 556.9V567.8M490 559.4V565.4M491 561.8V567.8M492 559.4V567.8M493 561.8V565.4M494 556.9V565.4M495 559.4V565.4M496 559.4V567.8M497 559.4V567.8M498 559.4V565.4M499 559.4V567.8M500 559.4V567.8M501 559.4V565.4M502 556.9V567.8M503 556.9V567.8M504 559.4V567.8M505 559.4V570.3M506 561.8V572.8M507 556.9V567.8M508 556.9V565.4M509 559.4V570.3M510 559.4V567.8M511 559.4V567.8M512 559.4V567.8M513 559.4V570.3M514 561.8V565.4M515 559.4V570.3M516 556.9V567.8M517 561.8V570.3M518 556.9V565.4M519 559.4V565.4M520 559.4V567.8M521 559.4V567.8M522 559.4V570.3M523 561.8V570.3M524 556.9V567.8M525 559.4V567.8M526 559.4V565.4M527 561.8V567.8M528 559.4V567.8M529 556.9V567.8M530 559.4V565.4M531 559.4V572.8M532 559.4V567.8M533 559.4V567.8M534 559.4V582.6M535 576.6V587.5M536 579V587.5M537 576.6V585.1M538 579V585.1M539 579V587.5M540 576.6V585.1M541 576.6V585.1M542 574.1V587.5M543 576.6V587.5M544 571.7V582.6M545 574.1V585.1M546 579V587.5M547 576.6V587.5M548 576.6V585.1M549 576.6V585.1M550 579V582.6M551 574.1V587.5M552 576.6V585.1M553 576.6V585.1M554 579V587.5M555 576.6V587.5M556 576.6V585.1M557 579V587.5M558 576.6V587.5M559 574.1V587.5M560 576.6V585.1M561 579V585.1M562 576.6V585.1M563 576.6V585.1M564 576.6V587.5M565 579V587.5M566 576.6V587.5M567 576.6V587.5M568 576.6V585.1M569 576.6V585.1M570 579V585.1M571 574.1V585.1M572 576.6V585.1M573 574.1V585.1M574 579V585.1M575 579V587.5M576 576.6V585.1M577 579V585.1M578 574.1V587.5M579 579V587.5M580 579V585.1M581 325.6V582.6M582 325.6V353.8M583 352.7V398.1M584 372.4V398.1M585 355.1V373.5M586 355.1V368.5M587 362.5V371M588 365V378.4M589 365V378.4M590 374.8V577.7M591 566.7V580.1M592 547.1V567.8M593 537.2V550.6M594 544.6V560.5M595 539.7V553.1M596 539.7V550.6M597 542.1V550.6M598 544.6V553.1M599 544.6V553.1M600 544.6V553.1M601 542.1V550.6M602 542.1V550.6M603 547.1V550.6M604 544.6V555.5M605 542.1V553.1M606 542.1V553.1M607 542.1V553.1M608 542.1V553.1M609 544.6V553.1M610 544.6V550.6M611 542.1V550.6M612 542.1V553.1M613 542.1V555.5M614 544.6V553.1M615 542.1V553.1M616 544.6V550.6M617 542.1V550.6M618 542.1V548.2M619 542.1V553.1M620 544.6V553.1M621 539.7V550.6M622 544.6V553.1M623 542.1V550.6M624 542.1V550.6M625 544.6V550.6M626 544.6V553.1M627 544.6V550.6M628 544.6V553.1M629 542.1V550.6M630 542.1V553.1M631 539.7V555.5M632 291.2V540.8M633 291.2V329.2M634 328.1V398.1M635 369.9V393.2M636 350.2V375.9M637 355.1V371M638 357.6V371M639 362.5V373.5M640 365V373.5M641 369.9V577.7M642 564.3V577.7M643 547.1V565.4M644 537.2V548.2M645 544.6V558M646 542.1V558M647 542.1V550.6M648 542.1V550.6M649 542.1V550.6M650 542.1V553.1M651 542.1V553.1M652 542.1V550.6M653 542.1V550.6M654 544.6V550.6M655 544.6V553.1M656 544.6V550.6M657 544.6V553.1M658 542.1V553.1M659 544.6V553.1M660 544.6V555.5M661 542.1V550.6M662 544.6V550.6M663 544.6V553.1M664 542.1V553.1M665 542.1V550.6M666 544.6V550.6M667 544.6V555.5M668 542.1V553.1M669 542.1V550.6M670 542.1V550.6M671 542.1V548.2M672 544.6V550.6M673 542.1V553.1M674 542.1V550.6M675 542.1V550.6M676 542.1V553.1M677 542.1V553.1M678 542.1V550.6M679 542.1V553.1M680 542.1V550.6M681 539.7V550.6M682 544.6V555.5M683 291.2V548.2M684 288.7V329.2M685 328.1V390.7M686 367.4V390.7M687 352.7V371M688 355.1V371M689 362.5V371M690 362.5V373.5M691 365V373.5M692 367.4V575.2M693 564.3V577.7M694 544.6V567.8M695 534.8V548.2M696 544.6V553.1M697 542.1V553.1M698 542.1V553.1M699 544.6V553.1M700 542.1V553.1M701 542.1V553.1M702 542.1V553.1M703 544.6V555.5M704 544.6V553.1M705 544.6V553.1M706 542.1V555.5M707 542.1V555.5M708 544.6V553.1M709 542.1V550.6M710 547.1V553.1M711 542.1V550.6M712 542.1V550.6M713 544.6V553.1M714 544.6V550.6M715 542.1V553.1M716 542.1V553.1M717 544.6V553.1M718 542.1V553.1M719 544.6V553.1M720 542.1V553.1M721 544.6V553.1M722 544.6V553.1M723 544.6V550.6M724 544.6V555.5M725 544.6V553.1M726 544.6V550.6M727 542.1V553.1M728 539.7V553.1M729 542.1V553.1M730 544.6V555.5M731 547.1V553.1M732 547.1V555.5M733 288.7V550.6M734 286.3V331.6M735 328.1V393.2M736 367.4V385.8M737 347.8V368.5M738 355.1V368.5M739 362.5V368.5M740 362.5V373.5M741 365V371M742 365V575.2M743 566.7V575.2M744 544.6V567.8M745 534.8V550.6M746 544.6V555.5M747 544.6V553.1M748 542.1V550.6M749 544.6V550.6M750 544.6V550.6M751 544.6V550.6M752 544.6V553.1M753 539.7V550.6M754 544.6V550.6M755 544.6V553.1M756 544.6V553.1M757 542.1V555.5M758 544.6V550.6M759 544.6V550.6M760 542.1V555.5M761 539.7V553.1M762 542.1V553.1M763 544.6V555.5M764 544.6V550.6M765 542.1V555.5M766 542.1V553.1M767 544.6V553.1M768 542.1V550.6M769 542.1V553.1M770 544.6V550.6M771 539.7V553.1M772 542.1V553.1M773 544.6V553.1M774 544.6V553.1M775 542.1V553.1M776 542.1V553.1M777 547.1V553.1M778 542.1V550.6M779 544.6V553.1M780 544.6V553.1M781 539.7V553.1M782 539.7V553.1M783 544.6V558M784 288.7V545.7M785 288.7V329.2M786 328.1V393.2M787 372.4V390.7M788 352.7V373.5M789 355.1V373.5M790 357.6V373.5M791 360.1V371M792 365V371M793 369.9V577.7M794 569.2V577.7M795 547.1V570.3M796 539.7V548.2M797 544.6V555.5M798 544.6V555.5M799 544.6V553.1M800 544.6V553.1M801 544.6V553.1M802 544.6V553.1M803 544.6V550.6M804 539.7V553.1M805 542.1V550.6M806 544.6V550.6M807 542.1V550.6M808 544.6V550.6M809 542.1V550.6M810 544.6V555.5M811 544.6V553.1M812 544.6V553.1M813 544.6V555.5M814 542.1V553.1M815 544.6V553.1M816 547.1V553.1M817 542.1V555.5M818 542.1V550.6M819 542.1V550.6M820 544.6V550.6M821 544.6V553.1M822 542.1V550.6M823 544.6V550.6M824 544.6V555.5M825 547.1V555.5M826 547.1V550.6M827 544.6V550.6M828 542.1V553.1M829 544.6V553.1M830 544.6V553.1M831 544.6V553.1M832 544.6V553.1M833 544.6V553.1M834 542.1V560.5M835 291.2V543.2M836 291.2V329.2M837 328.1V388.2M838 369.9V388.2M839 350.2V371M840 352.7V368.5M841 355.1V371M842 355.1V373.5M843 367.4V375.9M844 369.9V575.2M845 564.3V577.7M846 547.1V565.4M847 537.2V548.2M848 544.6V555.5M849 544.6V553.1M850 542.1V553.1M851 547.1V553.1M852 544.6V553.1M853 544.6V553.1M854 547.1V553.1M855 539.7V553.1M856 542.1V553.1M857 544.6V558M858 547.1V553.1M859 544.6V555.5M860 544.6V553.1M861 542.1V553.1M862 544.6V553.1M863 547.1V553.1M864 547.1V553.1M865 544.6V555.5M866 544.6V553.1M867 544.6V553.1M868 547.1V553.1M869 544.6V555.5M870 544.6V553.1M871 544.6V555.5M872 544.6V553.1M873 544.6V555.5M874 544.6V553.1M875 544.6V555.5M876 544.6V555.5M877 544.6V553.1M878 544.6V553.1M879 542.1V553.1M880 547.1V553.1M881 547.1V553.1M882 547.1V555.5M883 544.6V555.5M884 544.6V550.6M885 542.1V553.1M886 291.2V543.2M887 291.2V326.7M888 325.6V388.2M889 367.4V385.8M890 352.7V373.5M891 355.1V371M892 360.1V373.5M893 362.5V378.4M894 367.4V375.9M895 369.9V577.7M896 569.2V577.7M897 549.5V570.3M898 537.2V550.6M899 547.1V555.5M900 542.1V555.5M901 542.1V550.6M902 547.1V553.1M903 542.1V550.6M904 544.6V555.5M905 542.1V555.5M906 544.6V553.1M907 547.1V555.5M908 547.1V555.5M909 544.6V553.1M910 544.6V553.1M911 547.1V553.1M912 544.6V553.1M913 547.1V553.1M914 544.6V553.1M915 542.1V553.1M916 542.1V553.1M917 547.1V555.5M918 547.1V555.5M919 544.6V553.1M920 544.6V558M921 544.6V553.1M922 544.6V558M923 544.6V555.5M924 544.6V553.1M925 547.1V555.5M926 547.1V555.5M927 547.1V555.5M928 544.6V553.1M929 544.6V555.5M930 544.6V555.5M931 547.1V553.1M932 544.6V553.1M933 544.6V555.5M934 544.6V555.5M935 544.6V558M936 288.7V548.2M937 288.7V329.2M938 328.1V390.7M939 369.9V390.7M940 352.7V371M941 357.6V371M942 357.6V371M943 357.6V373.5M944 367.4V375.9M945 372.4V577.7M946 569.2V580.1M947 547.1V572.8M948 537.2V548.2M949 542.1V555.5M950 542.1V553.1M951 542.1V553.1M952 547.1V553.1M953 547.1V553.1M954 547.1V553.1M955 544.6V553.1M956 544.6V553.1M957 544.6V553.1M958 544.6V553.1M959 544.6V553.1M960 544.6V553.1M961 544.6V553.1M962 544.6V553.1M963 544.6V553.1M964 544.6V553.1M965 547.1V553.1M966 547.1V555.5M967 544.6V555.5M968 544.6V555.5M969 542.1V555.5M970 542.1V553.1M971 544.6V555.5M972 544.6V555.5M973 544.6V555.5M974 544.6V553.1M975 547.1V555.5M976 544.6V553.1M977 542.1V555.5M978 544.6V553.1M979 547.1V555.5M980 547.1V555.5M981 544.6V553.1M982 544.6V555.5M983 544.6V555.5M984 547.1V553.1M985 547.1V553.1M986 544.6V558M987 283.8V548.2M988 283.8V326.7M989 325.6V393.2M990 367.4V385.8M991 352.7V373.5M992 352.7V368.5M993 355.1V368.5M994 360.1V371M995 365V371M996 369.9V577.7M997 566.7V577.7M998 549.5V567.8M999 539.7V550.6M1000 544.6V558M1001 547.1V555.5M1002 544.6V553.1M1003 544.6V553.1M1004 547.1V553.1M1005 544.6V553.1M1006 547.1V555.5M1007 544.6V555.5M1008 547.1V553.1M1009 544.6V555.5M1010 547.1V553.1M1011 544.6V555.5M1012 544.6V553.1M1013 547.1V555.5M1014 544.6V555.5M1015 547.1V553.1M1016 547.1V553.1M1017 544.6V555.5M1018 544.6V553.1M1019 542.1V553.1M1020 544.6V555.5M1021 544.6V553.1M1022 544.6V555.5M1023 547.1V555.5M1024 547.1V558M1025 544.6V553.1M1026 542.1V553.1M1027 547.1V555.5M1028 547.1V555.5M1029 547.1V555.5M1030 547.1V553.1M1031 542.1V555.5M1032 544.6V553.1M1033 547.1V555.5M1034 547.1V555.5M1035 547.1V553.1M1036 544.6V555.5M1037 547.1V558M1038 293.6V550.6M1039 293.6V329.2M1040 328.1V390.7M1041 367.4V390.7M1042 350.2V368.5M1043 355.1V373.5M1044 355.1V373.5M1045 357.6V373.5M1046 367.4V375.9M1047 369.9V575.2M1048 566.7V580.1M1049 547.1V567.8M1050 537.2V548.2M1051 544.6V558M1052 544.6V558M1053 542.1V550.6M1054 544.6V553.1M1055 544.6V553.1M1056 542.1V553.1M1057 547.1V555.5M1058 547.1V558M1059 542.1V553.1M1060 547.1V553.1M1061 547.1V555.5M1062 549.5V553.1M1063 544.6V553.1M1064 544.6V553.1M1065 544.6V553.1M1066 547.1V553.1M1067 547.1V558M1068 544.6V553.1M1069 547.1V553.1M1070 547.1V555.5M1071 547.1V555.5M1072 547.1V553.1M1073 544.6V555.5M1074 547.1V553.1M1075 544.6V555.5M1076 547.1V555.5M1077 544.6V553.1M1078 547.1V555.5M1079 547.1V555.5M1080 544.6V555.5M1081 547.1V553.1M1082 547.1V555.5M1083 547.1V555.5M1084 547.1V555.5M1085 547.1V555.5M1086 547.1V555.5M1087 547.1V555.5M1088 291.2V548.2M1089 291.2V329.2M1090 328.1V390.7M1091 369.9V390.7M1092 352.7V371M1093 357.6V366.1M1094 352.7V363.6M1095 360.1V373.5M1096 367.4V375.9M1097 369.9V577.7M1098 564.3V577.7M1099 547.1V572.8M1100 539.7V548.2M1101 542.1V558M1102 544.6V553.1M1103 544.6V553.1M1104 544.6V558M1105 547.1V555.5M1106 547.1V553.1M1107 544.6V558M1108 547.1V555.5M1109 547.1V555.5M1110 544.6V553.1M1111 547.1V555.5M1112 547.1V558M1113 544.6V555.5M1114 547.1V553.1M1115 547.1V555.5M1116 544.6V555.5M1117 547.1V555.5M1118 547.1V553.1M1119 547.1V553.1M1120 547.1V555.5M1121 547.1V555.5M1122 549.5V555.5M1123 549.5V555.5M1124 547.1V555.5M1125 547.1V553.1M1126 547.1V555.5M1127 544.6V555.5M1128 547.1V553.1M1129 547.1V553.1M1130 544.6V555.5M1131 547.1V555.5M1132 547.1V555.5M1133 547.1V555.5M1134 549.5V555.5M1135 544.6V555.5M1136 547.1V555.5M1137 547.1V553.1M1138 544.6V555.5M1139 296.1V545.7M1140 296.1V334.1M1141 333V393.2M1142 367.4V388.2M1143 352.7V368.5M1144 355.1V368.5M1145 352.7V371M1146 360.1V373.5M1147 365V373.5M1148 367.4V572.8M1149 566.7V577.7M1150 547.1V567.8M1151 537.2V550.6M1152 544.6V555.5M1153 544.6V555.5M1154 542.1V553.1M1155 544.6V555.5M1156 547.1V558M1157 544.6V553.1M1158 547.1V553.1M1159 547.1V555.5M1160 547.1V555.5M1161 547.1V555.5M1162 547.1V553.1M1163 544.6V555.5M1164 544.6V555.5M1165 547.1V555.5M1166 544.6V553.1M1167 547.1V555.5M1168 542.1V558M1169 547.1V555.5M1170 544.6V555.5M1171 547.1V555.5M1172 547.1V553.1M1173 549.5V558M1174 547.1V555.5M1175 547.1V555.5M1176 544.6V555.5M1177 547.1V558M1178 544.6V553.1M1179 547.1V555.5M1180 547.1V553.1M1181 544.6V553.1M1182 542.1V553.1M1183 547.1V555.5M1184 547.1V555.5M1185 544.6V555.5M1186 544.6V553.1M1187 544.6V555.5M1188 544.6V555.5M1189 547.1V558M1190 293.6V548.2M1191 293.6V334.1M1192 333V390.7M1193 372.4V385.8M1194 357.6V375.9M1195 357.6V373.5M1196 352.7V371M1197 352.7V368.5M1198 362.5V373.5M1199 369.9V570.3M1200 566.7V572.8M1201 547.1V570.3M1202 539.7V558M1203 544.6V558M1204 542.1V558M1205 542.1V553.1M1206 544.6V555.5M1207 547.1V555.5M1208 547.1V555.5M1209 544.6V555.5M1210 549.5V553.1M1211 547.1V555.5M1212 547.1V555.5M1213 547.1V555.5M1214 547.1V555.5M1215 549.5V555.5M1216 547.1V555.5M1217 547.1V555.5M1218 547.1V555.5M1219 547.1V558M1220 544.6V558M1221 544.6V555.5M1222 547.1V555.5M1223 549.5V555.5M1224 547.1V553.1M1225 547.1V553.1M1226 544.6V558M1227 547.1V555.5M1228 547.1V558M1229 544.6V555.5M1230 547.1V555.5M1231 547.1V555.5M1232 544.6V558M1233 547.1V553.1M1234 547.1V553.1M1235 547.1V558M1236 547.1V555.5M1237 544.6V553.1M1238 547.1V553.1" stroke="#20ff20" stroke-width="1.35" fill="none" opacity="1"/>
<path d="M1033.7 6.5 V621" stroke="#48ff48" stroke-width="1.7"/>
<path d="M1053.2 6.5 V621" stroke="#30ff30" stroke-width="1.7" stroke-dasharray="2.2 1.8"/>
<path d="M1238.5 517 H1226" stroke="#22ee22" stroke-width="1.4" fill="none"/>
<path d="M1219 517 L1227.4 512.7 V521.3 Z" fill="#22ee22"/>
<path d="M1232.5 6.5 H1238.5 V16.5 Z" fill="#0a7cff"/>
<!-- trigger position marker -->
<text x="359.7" y="14.7" font-size="10.5" font-weight="bold" font-family="Liberation Sans, sans-serif" textLength="5.6" lengthAdjust="spacingAndGlyphs" fill="#0a0a0a">tt</text>
<!-- channel markers -->
<g font-family="Liberation Sans, sans-serif" font-weight="bold" font-size="11.5" fill="#fff" text-anchor="middle">
<path d="M265 90.3 H270" stroke="#2418ff" stroke-width="1.5" fill="none"/><path d="M269 86.1 L275.8 90.3 L269 94.5 Z" fill="#2418ff"/>
<circle cx="256.5" cy="90.3" r="9" fill="#1a10fc" stroke="#1a6cff" stroke-width="1.8"/>
<text x="256.5" y="94.5">1</text>
<path d="M265 170 H270" stroke="#ff1414" stroke-width="1.5" fill="none"/><path d="M269 165.8 L275.8 170 L269 174.2 Z" fill="#ff1414"/>
<circle cx="256.5" cy="170" r="9" fill="#fc0a0a" stroke="#46504a" stroke-width="1.8"/>
<text x="256.5" y="174.4">2</text>
<path d="M265 417.2 H270" stroke="#ff22ff" stroke-width="1.5" fill="none"/><path d="M269 413.0 L275.8 417.2 L269 421.4 Z" fill="#ff22ff"/>
<circle cx="256.5" cy="417.2" r="9" fill="#ff0af8" stroke="#46504a" stroke-width="1.8"/>
<text x="256.5" y="421.6">4</text>
<path d="M265 563.4 H270" stroke="#22ff22" stroke-width="1.5" fill="none"/><path d="M269 559.2 L275.8 563.4 L269 567.6 Z" fill="#22ff22"/>
<circle cx="256.5" cy="563.4" r="9" fill="#0af814" stroke="#46504a" stroke-width="1.8"/>
<text x="256.5" y="567.8">3</text>
</g>

</svg>

<!-- trace labels -->
<div class="lbl" style="left:269.9px;top:60.5px;color:#2418ff">INHA</div>
<div class="lbl" style="left:271.1px;top:140.5px;color:#ff1414">INLA</div>
<div class="lbl" style="left:265.5px;top:382.5px;color:#ff22ff">I_SHA</div>
<div class="lbl" style="left:271.7px;top:580.5px;transform:scaleX(.895);color:#22ee22">OUTA</div>

<!-- notes -->
<div class="note" id="n1" style="left:134.3px;top:239.2px;width:100px;">Dead<br>time</div>
<div class="note" id="n2" style="left:-11px;top:624px;width:240px;">MOSFET conducts,<br>V<sub>DS</sub> &lt; AD_LS<br>comparator</div>
<div class="note" id="n3" style="left:1276px;top:389.8px;width:340px;">MOSFET stops conducting,<br>body diode briefly conducts,<br>VDS &lt; AD_LS comparator</div>

<svg width="1608" height="721" viewBox="0 0 1608 721">
<rect x="268.1" y="630.5" width="272.0" height="88.5" rx="8" fill="#fff" stroke="#6c6c6c" stroke-width="1.8"/>
<rect x="546.2" y="630.5" width="131.1" height="88.5" rx="8" fill="#fff" stroke="#6c6c6c" stroke-width="1.8"/>
<rect x="823.9" y="630.5" width="180.1" height="21.4" rx="6" fill="#fff" stroke="#6c6c6c" stroke-width="1.8"/>
<rect x="1009.9" y="630.5" width="224.0" height="88.5" rx="8" fill="#fff" stroke="#6c6c6c" stroke-width="1.8"/>
<rect x="590.9" y="635.9" width="82.6" height="81.4" fill="#fff" stroke="#555" stroke-width="0.8"/>
<rect x="591.8" y="636.8" width="80.8" height="18.7" fill="none" stroke="#606060" stroke-width="0.9"/>
<rect x="591.8" y="657.1" width="80.8" height="18.8" fill="none" stroke="#606060" stroke-width="0.9"/>
<rect x="591.8" y="677.6" width="80.8" height="18.7" fill="none" stroke="#606060" stroke-width="0.9"/>
<rect x="591.8" y="698.1" width="80.8" height="18.4" fill="none" stroke="#606060" stroke-width="0.9"/>
</svg>
<!-- channel box -->
<div class="pill" style="left:275.6px;top:637px;background:linear-gradient(#2a16ff,#4a3cf0 60%,#8c86e0);">C1</div>
<div class="pill" style="left:275.6px;top:657.6px;background:linear-gradient(#ff1414,#f03c3c 60%,#e08a8a);">C2</div>
<div class="pill" style="left:275.6px;top:678.2px;background:linear-gradient(#14ff14,#3cf03c 60%,#8ae08a);">C3</div>
<div class="pill" style="left:275.6px;top:698.8px;background:linear-gradient(#ff14ff,#f03cf0 60%,#e08ae0);">C4</div>
<div class="t" style="left:311.5px;top:635.5px;">4.0V/div</div>
<div class="t" style="left:311.5px;top:656.1px;">3.0V/div</div>
<div class="t" style="left:311.5px;top:676.7px;">2.0V/div</div>
<div class="t" style="left:311.5px;top:697.3px;">80.0mA/div</div>
<div class="t" style="left:424.8px;top:635.5px;">1M&Omega;</div>
<div class="t" style="left:424.8px;top:656.1px;">1M&Omega;</div>
<div class="t" style="left:424.8px;top:676.7px;">1M&Omega;</div>
<div class="t" style="left:424.8px;top:697.3px;">1M&Omega;</div>
<div class="bw" style="left:455px;top:636.2px;"><b>B</b><i>W</i><span>:500M</span></div>
<div class="bw" style="left:455px;top:656.8px;"><b>B</b><i>W</i><span>:500M</span></div>
<div class="bw" style="left:455px;top:677.4px;"><b>B</b><i>W</i><span>:500M</span></div>
<div class="bw" style="left:455px;top:698.0px;"><b>B</b><i>W</i><span>:120M</span></div>

<!-- cursor box -->
<div class="t" style="left:592.4px;top:638.5px;">-209.9&micro;s</div>
<div class="t" style="left:592.4px;top:659.1px;">-189.9&micro;s</div>
<div class="t" style="left:592.4px;top:679.7px;">20.0&micro;s</div>
<div class="t" style="left:592.4px;top:700.3px;">50.0kHz</div>

<div class="pill g" style="left:553px;top:639px;background:linear-gradient(#14f01e,#3cf03c 60%,#8ae08a);">t1</div>
<div class="pill g" style="left:553px;top:659.6px;background:linear-gradient(#14f01e,#3cf03c 60%,#8ae08a);">t2</div>
<div class="pill g" style="left:553px;top:680.2px;background:linear-gradient(#14f01e,#3cf03c 60%,#8ae08a);">&Delta;t</div>
<div class="pill g" style="left:553px;top:700.8px;background:linear-gradient(#14f01e,#3cf03c 60%,#8ae08a);">1/&Delta;t</div>

<!-- trigger box -->
<div class="abs" style="left:829px;top:636px;width:16px;height:15px;box-sizing:border-box;background:#242424;border:1px solid #1c5cf0;box-shadow:inset 0 0 0 .6px #1c5cf0;color:#fff;font-weight:bold;font-size:11px;line-height:13.5px;text-align:center;letter-spacing:-.5px;">A'</div>
<div class="pill" style="left:847.3px;top:637px;width:30.8px;background:linear-gradient(#14f01e,#3cf03c 60%,#8ae08a);">C3</div>

<div class="t" style="left:898.2px;top:635.5px;">1.52V</div>

<!-- timebase box -->
<div class="t" style="left:1017px;top:635.5px;">100&micro;s/div</div>
<div class="t" style="left:1080.6px;top:635.5px;">10.0MS/s</div>
<div class="t" style="left:1163.6px;top:635.5px;">100ns/pt</div>
<div class="t" style="left:1017px;top:656.1px;color:#14f0ff;">Stopped</div>
<div class="t" style="left:1105.8px;top:656.1px;">Single Seq</div>
<div class="t" style="left:1017px;top:676.7px;">1 acqs</div>
<div class="t" style="left:1153.6px;top:676.7px;">RL:10.0k</div>
<div class="t" style="left:1017px;top:697.3px;">Auto</div>
<div class="t" style="left:1057.5px;top:697.3px;">July 26, 2021</div>
<div class="t" style="left:1180.2px;top:697.3px;color:#1e6eff;">17:22:58</div>
<svg width="1608" height="721" viewBox="0 0 1608 721" style="pointer-events:none">
<path d="M881.4 648.4 H886.3 L891.3 636.9 H895.3" fill="none" stroke="#000" stroke-width="1.6"/>
<!-- annotation arrows -->
<g stroke="#b8181e" stroke-width="1" fill="#b8181e">
<line x1="234.1" y1="273.2" x2="513.4" y2="552.1"/>
<path d="M521.5 560.2 L509.1 556.3 L517.6 547.8 Z" stroke="none"/>
<line x1="202.4" y1="662.5" x2="476.0" y2="567.2"/>
<path d="M486.9 563.4 L478.0 572.8 L474.1 561.5 Z" stroke="none"/>
<line x1="1271.8" y1="435.1" x2="570.9" y2="570.8"/>
<path d="M559.6 573.0 L569.7 564.9 L572.0 576.7 Z" stroke="none"/>
</g>
<!-- thermometer -->
<path d="M1217.6 657.6 V668" stroke="#0a0ac8" stroke-width="2.6" stroke-linecap="round"/>
<circle cx="1217.6" cy="669.4" r="3.3" fill="#0a0ac8"/>
</svg>
</div>
</body></html>
